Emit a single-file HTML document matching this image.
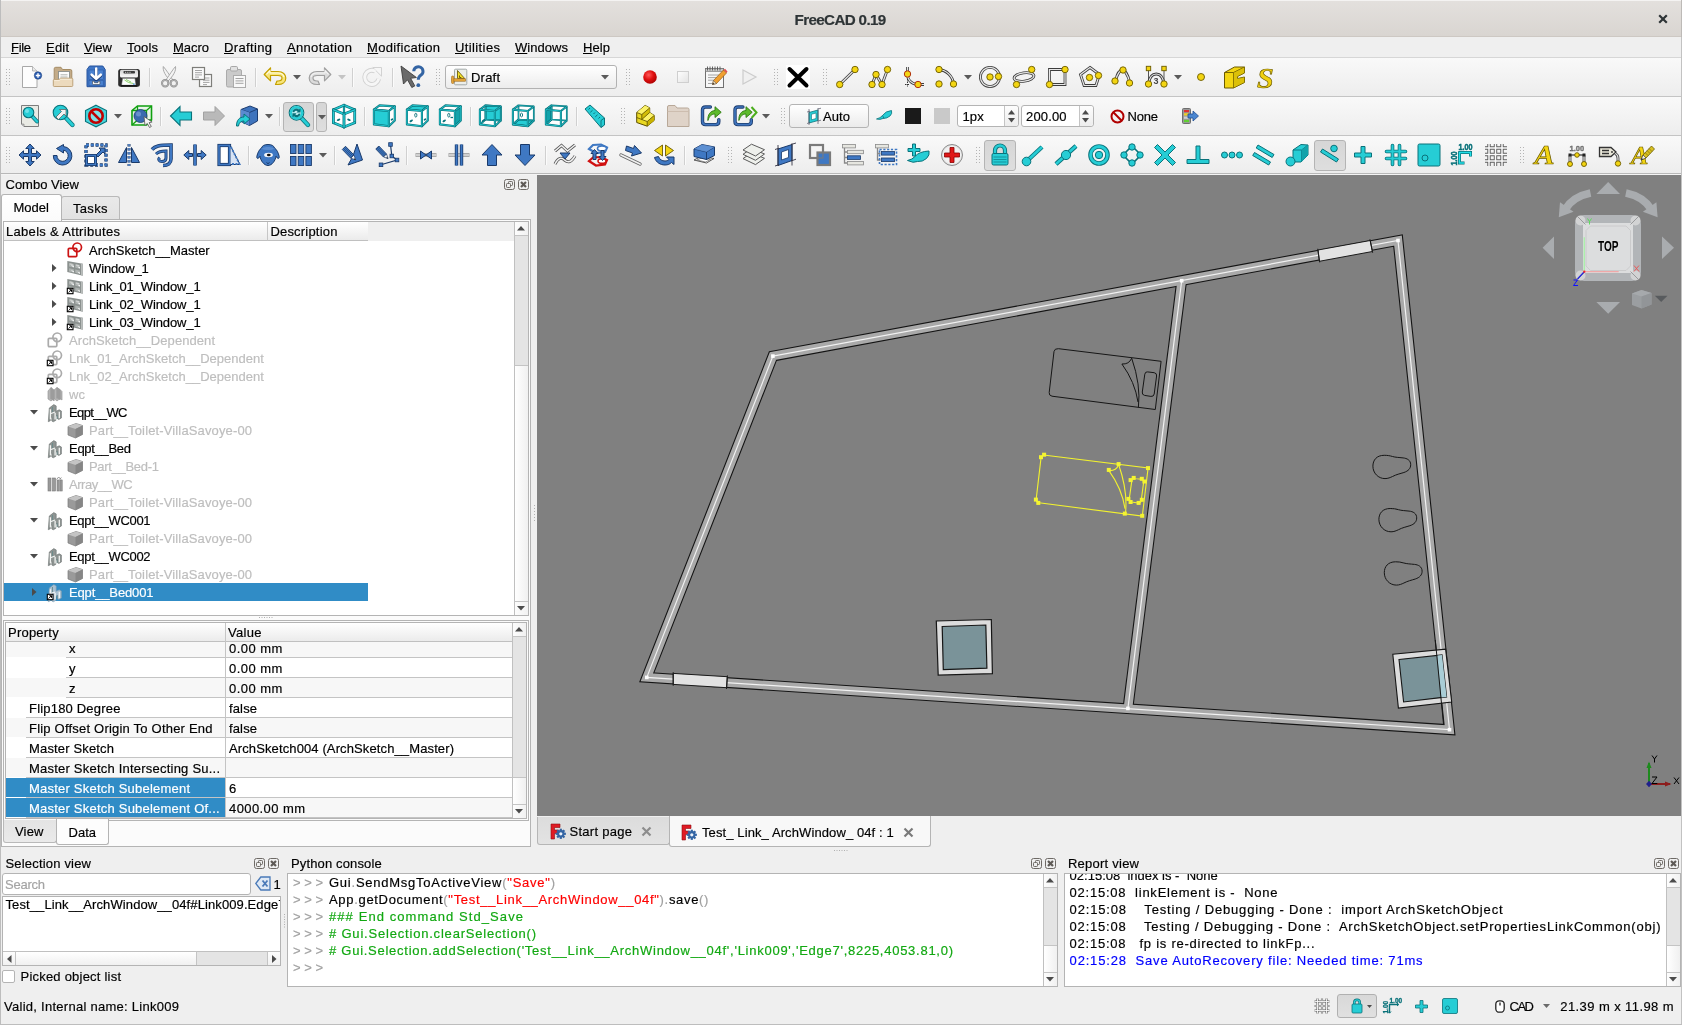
<!DOCTYPE html>
<html><head><meta charset="utf-8"><title>FreeCAD 0.19</title>
<style>
html,body{margin:0;padding:0;}
body{width:1682px;height:1025px;overflow:hidden;background:#efefef;font-family:"Liberation Sans",sans-serif;font-size:13px;position:relative;}
#w{position:absolute;left:0;top:0;width:1682px;height:1025px;will-change:transform;}
#w>div,#w>svg,#w>span{position:absolute;box-sizing:border-box;}
.t{white-space:pre;display:block;-webkit-text-stroke:0.18px currentColor;}
svg{overflow:visible;display:block;}
</style></head><body><div id="w">
<div style="left:0px;top:0px;width:1682px;height:37px;background:linear-gradient(#e3e0dd,#d9d5d1);border-top:1px solid #f4f3f2;border-bottom:1px solid #cdc8c3;"></div>
<span class="t" id="t0" style="left:794.6px;top:12.33px;font-size:15.2px;line-height:15.2px;color:#2e3436;font-weight:bold;letter-spacing:-0.651px;">FreeCAD 0.19</span>
<svg style="left:1658px;top:14px;" width="10" height="10" viewBox="0 0 10 10"><path d="M1.2 1.2l7.600 7.600M8.800 1.200l-7.600 7.600" stroke="#2e3436" stroke-width="2.2" fill="none"/></svg>
<div style="left:0px;top:37px;width:1682px;height:21px;background:#efefef;border-bottom:1px solid #d6d6d6;"></div>
<span class="t" id="t1" style="left:11px;top:40.80px;font-size:13px;line-height:13px;color:#000;letter-spacing:-0.323px;"><u>F</u>ile</span>
<span class="t" id="t2" style="left:46px;top:40.80px;font-size:13px;line-height:13px;color:#000;letter-spacing:0.198px;"><u>E</u>dit</span>
<span class="t" id="t3" style="left:84px;top:40.80px;font-size:13px;line-height:13px;color:#000;letter-spacing:0.016px;"><u>V</u>iew</span>
<span class="t" id="t4" style="left:127px;top:40.80px;font-size:13px;line-height:13px;color:#000;letter-spacing:0.160px;"><u>T</u>ools</span>
<span class="t" id="t5" style="left:173px;top:40.80px;font-size:13px;line-height:13px;color:#000;letter-spacing:-0.035px;"><u>M</u>acro</span>
<span class="t" id="t6" style="left:224px;top:40.80px;font-size:13px;line-height:13px;color:#000;letter-spacing:0.353px;"><u>D</u>rafting</span>
<span class="t" id="t7" style="left:287px;top:40.80px;font-size:13px;line-height:13px;color:#000;letter-spacing:0.314px;"><u>A</u>nnotation</span>
<span class="t" id="t8" style="left:367px;top:40.80px;font-size:13px;line-height:13px;color:#000;letter-spacing:0.328px;"><u>M</u>odification</span>
<span class="t" id="t9" style="left:455px;top:40.80px;font-size:13px;line-height:13px;color:#000;letter-spacing:0.387px;"><u>U</u>tilities</span>
<span class="t" id="t10" style="left:515px;top:40.80px;font-size:13px;line-height:13px;color:#000;letter-spacing:0.042px;"><u>W</u>indows</span>
<span class="t" id="t11" style="left:583px;top:40.80px;font-size:13px;line-height:13px;color:#000;letter-spacing:0.083px;"><u>H</u>elp</span>
<div style="left:0px;top:58px;width:1682px;height:39px;background:linear-gradient(#f9f9f9,#ededed);border-bottom:1px solid #c4c4c4;"></div>
<div style="left:0px;top:97px;width:1682px;height:39px;background:linear-gradient(#f9f9f9,#ededed);border-bottom:1px solid #c4c4c4;"></div>
<div style="left:0px;top:136px;width:1682px;height:38px;background:linear-gradient(#f9f9f9,#ededed);border-bottom:1px solid #c4c4c4;"></div>
<div style="left:0px;top:173px;width:1682px;height:1px;background:#b8b8b8;"></div>
<div style="left:0px;top:174px;width:1682px;height:1px;background:#f4f4f4;"></div>
<svg style="left:6px;top:69px;" width="5" height="18" viewBox="0 0 5 18"><rect x="0" y="0" width="1" height="1" fill="#b4b4b4"/><rect x="0" y="3" width="1" height="1" fill="#b4b4b4"/><rect x="0" y="6" width="1" height="1" fill="#b4b4b4"/><rect x="0" y="9" width="1" height="1" fill="#b4b4b4"/><rect x="0" y="12" width="1" height="1" fill="#b4b4b4"/><rect x="0" y="15" width="1" height="1" fill="#b4b4b4"/><rect x="3" y="0" width="1" height="1" fill="#b4b4b4"/><rect x="3" y="3" width="1" height="1" fill="#b4b4b4"/><rect x="3" y="6" width="1" height="1" fill="#b4b4b4"/><rect x="3" y="9" width="1" height="1" fill="#b4b4b4"/><rect x="3" y="12" width="1" height="1" fill="#b4b4b4"/><rect x="3" y="15" width="1" height="1" fill="#b4b4b4"/></svg>
<svg style="left:19.5px;top:65.0px" width="24" height="24" viewBox="0 0 24 24"><path d="M2.500 1.500h10l4.500 4.500v16.500h-14.500z" fill="#fdfdfd" stroke="#a8a8a8"/><path d="M12.500 1.500v4.500h4.500" fill="#eaeaea" stroke="#a8a8a8" stroke-width=".8"/><circle cx="18" cy="10.500" r="3.700" fill="#2c5fb3" stroke="#1c3f7c" stroke-width=".6"/><path d="M15.800 10.500h4.400M18 8.300v4.400" stroke="#fff" stroke-width="1.400"/></svg>
<svg style="left:51.0px;top:65.0px" width="24" height="24" viewBox="0 0 24 24"><path d="M3.200 21V3.800Q3.200 2.300 4.700 2.300H10L11.500 4.500H19.300Q20.800 4.500 20.800 6V21Z" fill="#c3ab88" stroke="#a58c64" stroke-width="1"/><rect x="7.500" y="6.500" width="11" height="9.500" fill="#fdfdfd" stroke="#8a8f8c" stroke-width=".9"/><path d="M9.500 9.800h7M9.500 12h7" stroke="#a8aca8" stroke-width=".9"/><path d="M2.300 15.500Q2.300 14.500 3.300 14.500H8L9.500 13.200H20.800Q21.800 13.200 21.800 14.200V20.500Q21.800 21.500 20.800 21.500H3.300Q2.300 21.500 2.300 20.500Z" fill="#ecdabd" stroke="#bfa47c" stroke-width="1"/><path d="M3.300 15.600H8.300L9.800 14.300H20.700" stroke="#f8eedb" stroke-width=".9" fill="none"/></svg>
<svg style="left:84.0px;top:65.0px" width="24" height="24" viewBox="0 0 24 24"><path d="M3 4.500L5.500 1H18.800L21.200 4.500V21.700H3Z" fill="#3f76c6" stroke="#27539c" stroke-width="1" stroke-linejoin="round"/><rect x="5" y="5" width="14.200" height="9.500" fill="#4b82d0" stroke="#27539c" stroke-width=".5"/><rect x="5" y="15.300" width="14.200" height="5.500" fill="#4b82d0" stroke="#27539c" stroke-width=".5"/><path d="M12.200 3.500V12.500M7.600 9.700L12.200 13.800L16.800 9.700" fill="none" stroke="#1f3f78" stroke-width="3.200" stroke-linecap="round" stroke-linejoin="round" transform="translate(0,.9)"/><path d="M12.200 3.500V12.500M7.600 9.700L12.200 13.800L16.800 9.700" fill="none" stroke="#fff" stroke-width="2.500" stroke-linecap="round" stroke-linejoin="round"/><path d="M8.500 16.300V18.600Q8.500 19.500 9.400 19.500H15Q15.900 19.500 15.900 18.600V16.300H14V17.700H10.400V16.300Z" fill="#f6f8fb" stroke="#2a2a2a" stroke-width=".5"/></svg>
<svg style="left:117px;top:65px;" width="24" height="24" viewBox="0 0 24 24"><defs><linearGradient id="pg1" x1="0" y1="0" x2="0" y2="1"><stop offset="0" stop-color="#d2d2d2"/><stop offset="1" stop-color="#fbfbfb"/></linearGradient></defs><rect x="1.200" y="4" width="21.700" height="17.800" rx="2.500" fill="#2b2b2b"/><rect x="3" y="4.800" width="18" height="7.700" rx="1.500" fill="url(#pg1)"/><rect x="6.500" y="6" width="11.500" height="2.600" rx=".8" fill="#3c3c3c"/><path d="M8 7.300h6" stroke="#c8c8c8" stroke-width="1" stroke-dasharray="1.200 1"/><path d="M5.500 13.300H18L19 20.300H4.500Z" fill="#fbfdfb" stroke="#444" stroke-width=".5"/><path d="M7.500 15l4 2.500 5 1M9 14.500l5 2.500" stroke="#8ccf6a" stroke-width="1" fill="none"/><rect x="16" y="18.500" width="1.800" height="1.200" fill="#4a90d9"/><rect x="3.500" y="20" width="17" height="1.800" rx=".8" fill="#171717"/></svg>
<div style="left:149px;top:68px;width:1px;height:19px;background:#d0d0d0;"></div>
<div style="left:150px;top:68px;width:1px;height:19px;background:#fbfbfb;"></div>
<svg style="left:157.0px;top:65.0px" width="24" height="24" viewBox="0 0 24 24"><path d="M6.300 1.500C5.500 5.500 8.500 11 13.800 16L15.600 14.600C12 9.500 9 4.500 6.300 1.500Z" fill="#f4f4f4" stroke="#a2a2a2" stroke-width=".9"/><g transform="translate(24.800,0) scale(-1,1)"><path d="M6.300 1.500C5.500 5.500 8.500 11 13.800 16L15.600 14.600C12 9.500 9 4.500 6.300 1.500Z" fill="#f4f4f4" stroke="#a2a2a2" stroke-width=".9"/></g><circle cx="8.200" cy="18.300" r="3.200" fill="none" stroke="#8e8e8e" stroke-width="2"/><circle cx="16.800" cy="18.300" r="3.200" fill="none" stroke="#8e8e8e" stroke-width="2"/><circle cx="8.200" cy="18.300" r="3.200" fill="none" stroke="#c8c8c8" stroke-width=".6"/><circle cx="16.800" cy="18.300" r="3.200" fill="none" stroke="#c8c8c8" stroke-width=".6"/></svg>
<svg style="left:190.0px;top:65.0px" width="24" height="24" viewBox="0 0 24 24"><rect x="9.500" y="9.500" width="12" height="12" fill="#fafafa" stroke="#7e7e7a" stroke-width="1.200"/><path d="M13 13h6.5M13 15.2h6.5M13 17.4h6.5" stroke="#9a9a9a" stroke-width=".9"/><path d="M13 19.600h4" stroke="#9a9a9a" stroke-width=".9"/><rect x="2.500" y="2.500" width="12" height="12" fill="#fafafa" stroke="#7e7e7a" stroke-width="1.200"/><path d="M5 5.5h7M5 7.7h7M5 9.9h7" stroke="#9a9a9a" stroke-width=".9"/><path d="M5 12.100h4" stroke="#9a9a9a" stroke-width=".9"/></svg>
<svg style="left:224.0px;top:65.0px" width="24" height="24" viewBox="0 0 24 24"><rect x="2.500" y="4.500" width="15" height="17.500" rx="1.500" fill="#cacaca" stroke="#ababab"/><rect x="6.500" y="1.500" width="7" height="4.500" rx="1.200" fill="#e2e2e2" stroke="#a8a8a8"/><rect x="9.500" y="10.500" width="12" height="12" fill="#f8f8f8" stroke="#ababab"/><path d="M11.5 13.5h8M11.5 15.9h8M11.5 18.3h8" stroke="#9a9a9a" stroke-width=".9"/></svg>
<div style="left:255px;top:68px;width:1px;height:19px;background:#d0d0d0;"></div>
<div style="left:256px;top:68px;width:1px;height:19px;background:#fbfbfb;"></div>
<svg style="left:263.0px;top:65.0px" width="24" height="24" viewBox="0 0 24 24"><path d="M1.200 9.500L7.500 2.800V6.500H15C20 6.500 22.800 9.500 22.800 13C22.800 17 19.500 19.500 15 19.500H12.500L14 16H15C17.500 16 19 14.800 19 13C19 11.200 17.500 10.500 15 10.500H7.500V15.800Z" fill="#f7e57a" stroke="#c4a000" stroke-width="1.200" stroke-linejoin="round"/><path d="M3.500 9.300l3.500-3.700v2.400h8c3.500 0 5.500 2 6 4" fill="none" stroke="#fffbe0" stroke-width="1.100"/></svg>
<svg style="left:293px;top:75px;" width="8" height="5" viewBox="0 0 8 5"><path d="M0 0h8l-4 4.500z" fill="#5a5a5a"/></svg>
<svg style="left:308.0px;top:65.0px" width="24" height="24" viewBox="0 0 24 24"><g transform="translate(24,0) scale(-1,1)"><path d="M1.200 9.500L7.500 2.800V6.500H15C20 6.500 22.800 9.500 22.800 13C22.800 17 19.500 19.500 15 19.500H12.500L14 16H15C17.500 16 19 14.800 19 13C19 11.200 17.500 10.500 15 10.500H7.500V15.800Z" fill="#dcdcdc" stroke="#a0a0a0" stroke-width="1.200" stroke-linejoin="round"/><path d="M3.500 9.300l3.500-3.700v2.400h8c3.500 0 5.500 2 6 4" fill="none" stroke="#f4f4f4" stroke-width="1.100"/></g></svg>
<svg style="left:338px;top:75px;" width="8" height="5" viewBox="0 0 8 5"><path d="M0 0h8l-4 4.500z" fill="#c4c4c4"/></svg>
<div style="left:352px;top:68px;width:1px;height:19px;background:#d0d0d0;"></div>
<div style="left:353px;top:68px;width:1px;height:19px;background:#fbfbfb;"></div>
<svg style="left:360.0px;top:65.0px" width="24" height="24" viewBox="0 0 24 24"><path d="M18.700 14a7.100 7.100 0 1 1-3.400-7.800" stroke="#d2d2d2" stroke-width="4.800" fill="none"/><path d="M12.800 2.500h8.700v8.700z" fill="#f6f6f6" stroke="#d2d2d2" stroke-width="1"/><path d="M18.700 14a7.100 7.100 0 1 1-3.400-7.800" stroke="#f6f6f6" stroke-width="3" fill="none"/></svg>
<div style="left:392px;top:68px;width:1px;height:19px;background:#d0d0d0;"></div>
<div style="left:393px;top:68px;width:1px;height:19px;background:#fbfbfb;"></div>
<svg style="left:400.0px;top:65.0px" width="24" height="24" viewBox="0 0 24 24"><path d="M1 1l2.500 18 4-4.200 4.300 7.700 3-1.600-4.200-7.600 5.800-.8z" fill="#6a6a6a" stroke="#3e3e3e" stroke-width=".9"/><path d="M13.800 6.300a4.600 4.600 0 1 1 7.200 3.800c-2 1.400-2.700 2.300-2.700 4.700" fill="none" stroke="#3465a4" stroke-width="3"/><circle cx="18.300" cy="20.200" r="1.900" fill="#3465a4"/></svg>
<svg style="left:436px;top:69px;" width="5" height="18" viewBox="0 0 5 18"><rect x="0" y="0" width="1" height="1" fill="#b4b4b4"/><rect x="0" y="3" width="1" height="1" fill="#b4b4b4"/><rect x="0" y="6" width="1" height="1" fill="#b4b4b4"/><rect x="0" y="9" width="1" height="1" fill="#b4b4b4"/><rect x="0" y="12" width="1" height="1" fill="#b4b4b4"/><rect x="0" y="15" width="1" height="1" fill="#b4b4b4"/><rect x="3" y="0" width="1" height="1" fill="#b4b4b4"/><rect x="3" y="3" width="1" height="1" fill="#b4b4b4"/><rect x="3" y="6" width="1" height="1" fill="#b4b4b4"/><rect x="3" y="9" width="1" height="1" fill="#b4b4b4"/><rect x="3" y="12" width="1" height="1" fill="#b4b4b4"/><rect x="3" y="15" width="1" height="1" fill="#b4b4b4"/></svg>
<div style="left:445px;top:65px;width:172px;height:24px;background:linear-gradient(#ffffff,#ececec);border:1px solid #b2b2b2;border-radius:3px;"></div>
<svg style="left:451px;top:68px;" width="17" height="18" viewBox="0 0 17 18"><rect x="3.500" y="1.200" width="12.300" height="15.600" rx="1" fill="#eceeea" stroke="#9aa0a0" stroke-width=".9"/><path d="M6.500 2.500v8h7.200z" fill="#f3e02a" stroke="#5c4e00" stroke-width=".8"/><path d="M8.500 7.500v2h1.800" stroke="#5c4e00" stroke-width=".9" fill="none"/><rect x="1" y="10.800" width="13.500" height="2.400" fill="#e8a83c" stroke="#9a6414" stroke-width=".6"/><rect x=".6" y="8" width="2.200" height="7.500" rx=".8" fill="#e8a83c" stroke="#9a6414" stroke-width=".6"/></svg>
<span class="t" id="t12" style="left:471px;top:71.00px;font-size:13px;line-height:13px;color:#000;letter-spacing:0.207px;">Draft</span>
<svg style="left:601px;top:75px;" width="8" height="5" viewBox="0 0 8 5"><path d="M0 0h8l-4 4.500z" fill="#5a5a5a"/></svg>
<svg style="left:626px;top:69px;" width="5" height="18" viewBox="0 0 5 18"><rect x="0" y="0" width="1" height="1" fill="#b4b4b4"/><rect x="0" y="3" width="1" height="1" fill="#b4b4b4"/><rect x="0" y="6" width="1" height="1" fill="#b4b4b4"/><rect x="0" y="9" width="1" height="1" fill="#b4b4b4"/><rect x="0" y="12" width="1" height="1" fill="#b4b4b4"/><rect x="0" y="15" width="1" height="1" fill="#b4b4b4"/><rect x="3" y="0" width="1" height="1" fill="#b4b4b4"/><rect x="3" y="3" width="1" height="1" fill="#b4b4b4"/><rect x="3" y="6" width="1" height="1" fill="#b4b4b4"/><rect x="3" y="9" width="1" height="1" fill="#b4b4b4"/><rect x="3" y="12" width="1" height="1" fill="#b4b4b4"/><rect x="3" y="15" width="1" height="1" fill="#b4b4b4"/></svg>
<svg style="left:643px;top:70px;" width="14" height="14" viewBox="0 0 14 14"><defs><radialGradient id="rg1" cx=".4" cy=".35" r=".7"><stop offset="0" stop-color="#ff5a5a"/><stop offset=".5" stop-color="#e01010"/><stop offset="1" stop-color="#a80000"/></radialGradient></defs><circle cx="7" cy="7" r="6.800" fill="url(#rg1)"/></svg>
<div style="left:677px;top:71px;width:12px;height:12px;background:linear-gradient(135deg,#fdfdfd,#e4e4e4);border:1px solid #cfcfcf;"></div>
<svg style="left:703.5px;top:65.0px" width="24" height="24" viewBox="0 0 24 24"><rect x="1.500" y="3.500" width="18" height="19" fill="#f7f7f7" stroke="#707070"/><rect x="1.500" y="3.500" width="18" height="3" fill="#c8c8c8" stroke="#707070" stroke-width=".6"/><path d="M3.500 1.500v4M6 1.500v4M8.500 1.500v4M11 1.500v4M13.500 1.500v4M16 1.500v4" stroke="#555" stroke-width=".9"/><path d="M4 10h11M4 12.6h11M4 15.2h11" stroke="#9a9a9a" stroke-width=".9"/><path d="M4 18.500h9" stroke="#9a9a9a" stroke-width=".9"/><path d="M8.500 19.500l1-4 10-10.500 3 3-10 10.500z" fill="#f0a030" stroke="#9a5a10" stroke-width=".7"/><path d="M19.500 5l3 3 1-1.500-2.500-2.800z" fill="#e05050"/><path d="M8.500 19.500l1-4 3 3z" fill="#f0d8b0" stroke="#555" stroke-width=".5"/><path d="M8.500 19.500l.5-1.800 1.300 1.300z" fill="#222"/></svg>
<svg style="left:741.5px;top:69px;" width="15" height="16" viewBox="0 0 15 16"><path d="M1 1l13 7-13 7z" fill="#f0f0f0" stroke="#cccccc" stroke-width="1.200"/></svg>
<svg style="left:774px;top:69px;" width="5" height="18" viewBox="0 0 5 18"><rect x="0" y="0" width="1" height="1" fill="#b4b4b4"/><rect x="0" y="3" width="1" height="1" fill="#b4b4b4"/><rect x="0" y="6" width="1" height="1" fill="#b4b4b4"/><rect x="0" y="9" width="1" height="1" fill="#b4b4b4"/><rect x="0" y="12" width="1" height="1" fill="#b4b4b4"/><rect x="0" y="15" width="1" height="1" fill="#b4b4b4"/><rect x="3" y="0" width="1" height="1" fill="#b4b4b4"/><rect x="3" y="3" width="1" height="1" fill="#b4b4b4"/><rect x="3" y="6" width="1" height="1" fill="#b4b4b4"/><rect x="3" y="9" width="1" height="1" fill="#b4b4b4"/><rect x="3" y="12" width="1" height="1" fill="#b4b4b4"/><rect x="3" y="15" width="1" height="1" fill="#b4b4b4"/></svg>
<div style="left:786px;top:65px;width:24px;height:24px;background:#fff;"><svg width="24" height="24" viewBox="0 0 24 24" style="position:absolute;left:0;top:0"><path d="M3.500 4l17 16.500M20.500 4l-17 16.500" stroke="#000" stroke-width="4" stroke-linecap="round"/></svg></div>
<svg style="left:823px;top:69px;" width="5" height="18" viewBox="0 0 5 18"><rect x="0" y="0" width="1" height="1" fill="#b4b4b4"/><rect x="0" y="3" width="1" height="1" fill="#b4b4b4"/><rect x="0" y="6" width="1" height="1" fill="#b4b4b4"/><rect x="0" y="9" width="1" height="1" fill="#b4b4b4"/><rect x="0" y="12" width="1" height="1" fill="#b4b4b4"/><rect x="0" y="15" width="1" height="1" fill="#b4b4b4"/><rect x="3" y="0" width="1" height="1" fill="#b4b4b4"/><rect x="3" y="3" width="1" height="1" fill="#b4b4b4"/><rect x="3" y="6" width="1" height="1" fill="#b4b4b4"/><rect x="3" y="9" width="1" height="1" fill="#b4b4b4"/><rect x="3" y="12" width="1" height="1" fill="#b4b4b4"/><rect x="3" y="15" width="1" height="1" fill="#b4b4b4"/></svg>
<svg style="left:835.0px;top:65.0px" width="24" height="24" viewBox="0 0 24 24"><path d="M4.700 19.500L20 4.500" fill="none" stroke="#3c3c3c" stroke-width="2.800"/><path d="M4.700 19.500L20 4.500" fill="none" stroke="#e8e8e8" stroke-width="1.200"/><circle cx="4.7" cy="19.5" r="3.2" fill="#f3d512" stroke="#6b5a00" stroke-width=".9"/><circle cx="20" cy="4.5" r="3.2" fill="#f3d512" stroke="#6b5a00" stroke-width=".9"/></svg>
<svg style="left:868.0px;top:65.0px" width="24" height="24" viewBox="0 0 24 24"><path d="M4 19.500L8 9.500L14 19.500L19.500 4.500" fill="none" stroke="#3c3c3c" stroke-width="2.800"/><path d="M4 19.500L8 9.500L14 19.500L19.500 4.500" fill="none" stroke="#e8e8e8" stroke-width="1.200"/><circle cx="4" cy="19.5" r="3.2" fill="#f3d512" stroke="#6b5a00" stroke-width=".9"/><circle cx="8" cy="9.5" r="3.2" fill="#f3d512" stroke="#6b5a00" stroke-width=".9"/><circle cx="14" cy="19.5" r="3.2" fill="#f3d512" stroke="#6b5a00" stroke-width=".9"/><circle cx="19.5" cy="4.5" r="3.2" fill="#f3d512" stroke="#6b5a00" stroke-width=".9"/></svg>
<svg style="left:900.5px;top:65.0px" width="24" height="24" viewBox="0 0 24 24"><path d="M6.500 2v5M18 19.500h5" fill="none" stroke="#3c3c3c" stroke-width="2.800"/><path d="M6.500 2v5M18 19.500h5" fill="none" stroke="#e8e8e8" stroke-width="1.200"/><path d="M6.500 9c0 6 4 10 10 10.500" fill="none" stroke="#3c3c3c" stroke-width="2.800"/><path d="M6.500 9c0 6 4 10 10 10.500" fill="none" stroke="#e8e8e8" stroke-width="1.200"/><circle cx="6.500" cy="9" r="3.200" fill="#f3d512" stroke="#b03010" stroke-width="1"/><circle cx="17" cy="19.500" r="3.200" fill="#f3d512" stroke="#b03010" stroke-width="1"/><path d="M4 19.500h5M6.500 14v8" stroke="#333" stroke-width="1" stroke-dasharray="1.500 1"/></svg>
<svg style="left:934.0px;top:65.0px" width="24" height="24" viewBox="0 0 24 24"><path d="M5 4.500C12 5 19 11 19.500 19" fill="none" stroke="#3c3c3c" stroke-width="2.800"/><path d="M5 4.500C12 5 19 11 19.500 19" fill="none" stroke="#e8e8e8" stroke-width="1.200"/><circle cx="5" cy="4.5" r="3.2" fill="#f3d512" stroke="#6b5a00" stroke-width=".9"/><circle cx="5" cy="19" r="3.2" fill="#f3d512" stroke="#6b5a00" stroke-width=".9"/><circle cx="19.5" cy="19" r="3.2" fill="#f3d512" stroke="#6b5a00" stroke-width=".9"/></svg>
<svg style="left:964px;top:75px;" width="8" height="5" viewBox="0 0 8 5"><path d="M0 0h8l-4 4.500z" fill="#5a5a5a"/></svg>
<svg style="left:978.0px;top:65.0px" width="24" height="24" viewBox="0 0 24 24"><circle cx="12" cy="12" r="9.600" fill="none" stroke="#3c3c3c" stroke-width="2.800"/><circle cx="12" cy="12" r="9.600" fill="none" stroke="#e8e8e8" stroke-width="1.200"/><circle cx="12" cy="12" r="3.2" fill="#f3d512" stroke="#6b5a00" stroke-width=".9"/><circle cx="20.5" cy="11.5" r="3.2" fill="#f3d512" stroke="#6b5a00" stroke-width=".9"/></svg>
<svg style="left:1012.0px;top:65.0px" width="24" height="24" viewBox="0 0 24 24"><ellipse cx="12" cy="12" rx="10" ry="4.200" transform="rotate(-8 12 12)" fill="none" stroke="#3c3c3c" stroke-width="2.800"/><ellipse cx="12" cy="12" rx="10" ry="4.200" transform="rotate(-8 12 12)" fill="none" stroke="#e8e8e8" stroke-width="1.200"/><circle cx="19.7" cy="4.5" r="3.2" fill="#f3d512" stroke="#6b5a00" stroke-width=".9"/><circle cx="4.5" cy="19.5" r="3.2" fill="#f3d512" stroke="#6b5a00" stroke-width=".9"/></svg>
<svg style="left:1045.0px;top:65.0px" width="24" height="24" viewBox="0 0 24 24"><path d="M4.500 4.500h15.500v15h-15.500z" fill="none" stroke="#3c3c3c" stroke-width="2.800"/><path d="M4.500 4.500h15.500v15h-15.500z" fill="none" stroke="#e8e8e8" stroke-width="1.200"/><circle cx="20" cy="4.5" r="3.2" fill="#f3d512" stroke="#6b5a00" stroke-width=".9"/><circle cx="4.5" cy="19.5" r="3.2" fill="#f3d512" stroke="#6b5a00" stroke-width=".9"/></svg>
<svg style="left:1077.5px;top:65.0px" width="24" height="24" viewBox="0 0 24 24"><path d="M12 2.500l9.500 7-3.600 11h-11.800l-3.600-11z" fill="none" stroke="#3c3c3c" stroke-width="2.800"/><path d="M12 2.500l9.500 7-3.600 11h-11.800l-3.600-11z" fill="none" stroke="#e8e8e8" stroke-width="1.200"/><circle cx="11.5" cy="12.5" r="3.2" fill="#f3d512" stroke="#6b5a00" stroke-width=".9"/><circle cx="20.5" cy="10.5" r="3.2" fill="#f3d512" stroke="#6b5a00" stroke-width=".9"/></svg>
<svg style="left:1111.0px;top:65.0px" width="24" height="24" viewBox="0 0 24 24"><path d="M4.500 16c2-9 5.500-11 7-11s5 3 7.500 13" fill="none" stroke="#3c3c3c" stroke-width="2.800"/><path d="M4.500 16c2-9 5.500-11 7-11s5 3 7.500 13" fill="none" stroke="#e8e8e8" stroke-width="1.200"/><circle cx="12" cy="5" r="3.2" fill="#f3d512" stroke="#6b5a00" stroke-width=".9"/><circle cx="4" cy="16" r="3.2" fill="#f3d512" stroke="#6b5a00" stroke-width=".9"/><circle cx="18.5" cy="18" r="3.2" fill="#f3d512" stroke="#6b5a00" stroke-width=".9"/></svg>
<svg style="left:1143.5px;top:65.0px" width="24" height="24" viewBox="0 0 24 24"><path d="M4.500 3.500v15M20 3.500v15" stroke="#555" stroke-width="1"/><path d="M4.500 19c1-8 4-10 7.800-10s6.700 2 7.700 10" fill="none" stroke="#3c3c3c" stroke-width="2.800"/><path d="M4.500 19c1-8 4-10 7.800-10s6.700 2 7.700 10" fill="none" stroke="#e8e8e8" stroke-width="1.200"/><rect x="2.3" y="1.2999999999999998" width="4.4" height="4.4" fill="#f3d512" stroke="#6b5a00" stroke-width=".9"/><rect x="17.8" y="1.2999999999999998" width="4.4" height="4.4" fill="#f3d512" stroke="#6b5a00" stroke-width=".9"/><circle cx="4.5" cy="19" r="3.2" fill="#f3d512" stroke="#6b5a00" stroke-width=".9"/><circle cx="20" cy="19" r="3.2" fill="#f3d512" stroke="#6b5a00" stroke-width=".9"/><text x="9.500" y="19" font-family="Liberation Sans" font-weight="bold" font-size="9" fill="#444">3</text></svg>
<svg style="left:1174px;top:75px;" width="8" height="5" viewBox="0 0 8 5"><path d="M0 0h8l-4 4.500z" fill="#5a5a5a"/></svg>
<svg style="left:1189.0px;top:65.0px" width="24" height="24" viewBox="0 0 24 24"><circle cx="12" cy="12" r="3.5" fill="#f3d512" stroke="#6b5a00" stroke-width=".9"/></svg>
<svg style="left:1222.0px;top:65.0px" width="24" height="24" viewBox="0 0 24 24"><path d="M2.500 7.500l10-5.500h10v6l-7 3.500v2l7-1.500v5.500l-11 5.500h-9z" fill="#f3d512" stroke="#6b5a00" stroke-width="1"/><path d="M2.500 7.500h9v15.500M11.500 7.500l11-5.500" stroke="#6b5a00" stroke-width=".9" fill="none"/><path d="M11.500 7.500v15.500l11-5.500v-5.500l-7 1.500v-2l7-3.500v-6z" fill="#c9ae00" opacity=".55"/></svg>
<svg style="left:1255.5px;top:65.0px" width="24" height="24" viewBox="0 0 24 24"><text x="1" y="22.500" font-family="Liberation Serif" font-style="italic" font-weight="bold" font-size="30" fill="#f0d010" stroke="#6b5a00" stroke-width=".7">S</text></svg>
<svg style="left:6px;top:108px;" width="5" height="18" viewBox="0 0 5 18"><rect x="0" y="0" width="1" height="1" fill="#b4b4b4"/><rect x="0" y="3" width="1" height="1" fill="#b4b4b4"/><rect x="0" y="6" width="1" height="1" fill="#b4b4b4"/><rect x="0" y="9" width="1" height="1" fill="#b4b4b4"/><rect x="0" y="12" width="1" height="1" fill="#b4b4b4"/><rect x="0" y="15" width="1" height="1" fill="#b4b4b4"/><rect x="3" y="0" width="1" height="1" fill="#b4b4b4"/><rect x="3" y="3" width="1" height="1" fill="#b4b4b4"/><rect x="3" y="6" width="1" height="1" fill="#b4b4b4"/><rect x="3" y="9" width="1" height="1" fill="#b4b4b4"/><rect x="3" y="12" width="1" height="1" fill="#b4b4b4"/><rect x="3" y="15" width="1" height="1" fill="#b4b4b4"/></svg>
<svg style="left:18.0px;top:104.0px" width="24" height="24" viewBox="0 0 24 24"><path d="M3.500 1.500h17v21h-14.500l-2.500-2.500z" fill="#e9eae4" stroke="#7d7d7d"/><path d="M3.500 20l2.500 .2v2.300" fill="#cfcfcf" stroke="#7d7d7d" stroke-width=".7"/><path d="M13.500 11.500l5.500 6" stroke="#0a727a" stroke-width="4" stroke-linecap="round"/><path d="M13.500 11.500l5.500 6" stroke="#26cdd5" stroke-width="2.400" stroke-linecap="round"/><circle cx="10.500" cy="8.500" r="5.300" fill="#26cdd5" stroke="#0a727a" stroke-width="1.100"/><circle cx="9" cy="7" r="2" fill="#8feaf0" opacity=".7"/></svg>
<svg style="left:51.0px;top:104.0px" width="24" height="24" viewBox="0 0 24 24"><path d="M14 13l7.500 8" stroke="#0a727a" stroke-width="4.400" stroke-linecap="round"/><path d="M14 13l7.500 8" stroke="#26cdd5" stroke-width="2.800" stroke-linecap="round"/><circle cx="9.500" cy="8.500" r="7.300" fill="#26cdd5" stroke="#0a727a" stroke-width="1.100"/><path d="M5 13l5.500-5.500-2-2h6.500v6.500l-2-2-5.500 5.500z" fill="#f2f2f2" stroke="#555" stroke-width=".7"/></svg>
<svg style="left:84.0px;top:104.0px" width="24" height="24" viewBox="0 0 24 24"><polygon points="12,1.200 22.500,6.500 22.500,17.500 12,22.800 1.500,17.500 1.500,6.500" fill="#45d5dc" stroke="#0a727a" stroke-width="1.100"/><circle cx="12" cy="12" r="6.700" fill="#7fe3e8" stroke="#c00000" stroke-width="2.600"/><path d="M7.300 7.300l9.400 9.400" stroke="#c00000" stroke-width="2.600"/></svg>
<svg style="left:114px;top:114px;" width="8" height="5" viewBox="0 0 8 5"><path d="M0 0h8l-4 4.500z" fill="#5a5a5a"/></svg>
<svg style="left:129.5px;top:104.0px" width="24" height="24" viewBox="0 0 24 24"><path d="M2 6.500l5.500-4.500h14v14l-5 5h-14.500z" fill="#e9f5e9" stroke="#10a010" stroke-width="1.600"/><path d="M2 6.500h14.500v14.500M16.500 6.500l5-4.500M7.500 2v14h14M7.500 16l-5.500 5" stroke="#10a010" stroke-width="1.300" fill="none"/><circle cx="10.500" cy="12" r="6.500" fill="#3a6ab0" stroke="#1c3c70" stroke-width=".8"/><circle cx="8.500" cy="10" r="2.500" fill="#7da0d8" opacity=".7"/><path d="M14 12.500l1 9 2.300-2 2.200 4 1.800-1-2.200-3.800 3-.7z" fill="#f4f4f4" stroke="#555" stroke-width=".8"/></svg>
<div style="left:160px;top:107px;width:1px;height:19px;background:#d0d0d0;"></div>
<div style="left:161px;top:107px;width:1px;height:19px;background:#fbfbfb;"></div>
<svg style="left:169.0px;top:104.0px" width="24" height="24" viewBox="0 0 24 24"><path d="M1.500 12l9.500-9.500v5.500h11.500v8h-11.500v5.500z" fill="#26cdd5" stroke="#0a727a" stroke-width="1.100"/></svg>
<svg style="left:202.0px;top:104.0px" width="24" height="24" viewBox="0 0 24 24"><g transform="translate(24,0) scale(-1,1)"><path d="M1.500 12l9.500-9.500v5.500h11.500v8h-11.500v5.500z" fill="#b9b9b9" stroke="#a2a2a2" stroke-width="1"/></g></svg>
<svg style="left:235.0px;top:104.0px" width="24" height="24" viewBox="0 0 24 24"><path d="M6 5.500l9-3.500 7.500 3v12l-8 4.500-8.500-4z" fill="#3f74bd" stroke="#1c3c70" stroke-width="1"/><path d="M6 5.500l8.500 3 8-3.500M14.500 8.500v13" stroke="#1c3c70" stroke-width=".9" fill="none"/><path d="M6 5.500l8.500 3v13l-8.500-4z" fill="#5a8ad0"/><path d="M1.500 22c0-6 3-9 7.500-9v-3l6 5-6 5v-3c-3 0-5 1.500-5.500 5z" fill="#26cdd5" stroke="#0a727a" stroke-width="1"/></svg>
<svg style="left:265px;top:114px;" width="8" height="5" viewBox="0 0 8 5"><path d="M0 0h8l-4 4.500z" fill="#5a5a5a"/></svg>
<div style="left:279px;top:107px;width:1px;height:19px;background:#d0d0d0;"></div>
<div style="left:280px;top:107px;width:1px;height:19px;background:#fbfbfb;"></div>
<div style="left:283px;top:101.5px;width:31px;height:30px;background:linear-gradient(#d6d6d6,#dedede);border:1px solid #b4b4b4;border-radius:3px;"></div>
<div style="left:316px;top:101.5px;width:11px;height:30px;background:linear-gradient(#d6d6d6,#dedede);border:1px solid #b4b4b4;border-radius:3px;"></div>
<svg style="left:286.5px;top:104.0px" width="24" height="24" viewBox="0 0 24 24"><path d="M14 13.500l7 7.500" stroke="#0a727a" stroke-width="4.400" stroke-linecap="round"/><path d="M14 13.500l7 7.500" stroke="#26cdd5" stroke-width="2.800" stroke-linecap="round"/><circle cx="9.500" cy="8.800" r="7.300" fill="#bfeff2" stroke="#0a727a" stroke-width="1.100"/><circle cx="9.500" cy="8.800" r="5.600" fill="none" stroke="#26cdd5" stroke-width="2.600"/><path d="M5.500 8a4 4 0 0 1 6.500-2.500l1.500-1v4h-4l1.200-1.300a2.300 2.300 0 0 0-3.500 1zM13.500 9.800a4 4 0 0 1-6.500 2.500l-1.500 1v-4h4l-1.200 1.300a2.300 2.300 0 0 0 3.500-1z" fill="#0a727a"/></svg>
<svg style="left:317.5px;top:115px;" width="8" height="5" viewBox="0 0 8 5"><path d="M0 0h8l-4 4.500z" fill="#5a5a5a"/></svg>
<svg style="left:332.0px;top:104.0px" width="24" height="24" viewBox="0 0 24 24"><polygon points="12,1.2 22.7,5.8 22.7,18.7 12,23 1.4,18.7 1.4,5.8" fill="#fff"/><path d="M12 1.2L12 23" stroke="#0a727a" stroke-width="2.2" stroke-linecap="round"/><path d="M12 1.2L12 23" stroke="#26cdd5" stroke-width="0.7999999999999999" stroke-linecap="round"/><path d="M12 1.2L22.7 5.8" stroke="#0a727a" stroke-width="2.8" stroke-linecap="round"/><path d="M12 1.2L22.7 5.8" stroke="#26cdd5" stroke-width="1.4" stroke-linecap="round"/><path d="M22.7 5.8L22.7 18.7" stroke="#0a727a" stroke-width="2.8" stroke-linecap="round"/><path d="M22.7 5.8L22.7 18.7" stroke="#26cdd5" stroke-width="1.4" stroke-linecap="round"/><path d="M22.7 18.7L12 23" stroke="#0a727a" stroke-width="2.8" stroke-linecap="round"/><path d="M22.7 18.7L12 23" stroke="#26cdd5" stroke-width="1.4" stroke-linecap="round"/><path d="M12 23L1.4 18.7" stroke="#0a727a" stroke-width="2.8" stroke-linecap="round"/><path d="M12 23L1.4 18.7" stroke="#26cdd5" stroke-width="1.4" stroke-linecap="round"/><path d="M1.4 18.7L1.4 5.8" stroke="#0a727a" stroke-width="2.8" stroke-linecap="round"/><path d="M1.4 18.7L1.4 5.8" stroke="#26cdd5" stroke-width="1.4" stroke-linecap="round"/><path d="M1.4 5.8L12 1.2" stroke="#0a727a" stroke-width="2.8" stroke-linecap="round"/><path d="M1.4 5.8L12 1.2" stroke="#26cdd5" stroke-width="1.4" stroke-linecap="round"/><path d="M12 10L22.7 5.8" stroke="#0a727a" stroke-width="2.8" stroke-linecap="round"/><path d="M12 10L22.7 5.8" stroke="#26cdd5" stroke-width="1.4" stroke-linecap="round"/><path d="M12 10L1.4 5.8" stroke="#0a727a" stroke-width="2.8" stroke-linecap="round"/><path d="M12 10L1.4 5.8" stroke="#26cdd5" stroke-width="1.4" stroke-linecap="round"/><path d="M12 10L12 23" stroke="#0a727a" stroke-width="2.8" stroke-linecap="round"/><path d="M12 10L12 23" stroke="#26cdd5" stroke-width="1.4" stroke-linecap="round"/><ellipse cx="6.500" cy="15.800" rx="1.900" ry="1" transform="rotate(-25 6.500 15.800)" fill="#0a727a"/><ellipse cx="17" cy="15.800" rx="1.900" ry="1" transform="rotate(25 17 15.800)" fill="#0a727a"/></svg>
<div style="left:364px;top:107px;width:1px;height:19px;background:#d0d0d0;"></div>
<div style="left:365px;top:107px;width:1px;height:19px;background:#fbfbfb;"></div>
<svg style="left:371.5px;top:104.0px" width="24" height="24" viewBox="0 0 24 24"><polygon points="1.9,5.6 16.9,7.0 22.8,2.4 7.5,1.4" fill="#fff" stroke="#0a727a" stroke-width="2.1" stroke-linejoin="round"/><polygon points="1.9,5.6 16.9,7.0 22.8,2.4 7.5,1.4" fill="none" stroke="#26cdd5" stroke-width="0.8999999999999999" stroke-linejoin="round"/><polygon points="16.9,7.0 22.8,2.4 22.8,16.6 16.9,22.2" fill="#fff" stroke="#0a727a" stroke-width="2.1" stroke-linejoin="round"/><polygon points="16.9,7.0 22.8,2.4 22.8,16.6 16.9,22.2" fill="none" stroke="#26cdd5" stroke-width="0.8999999999999999" stroke-linejoin="round"/><polygon points="1.9,5.6 16.9,7.0 16.9,22.2 1.9,20.4" fill="#26cdd5" stroke="#0a727a" stroke-width="2.1" stroke-linejoin="round"/><polygon points="1.9,5.6 16.9,7.0 16.9,22.2 1.9,20.4" fill="none" stroke="#26cdd5" stroke-width="0.8999999999999999" stroke-linejoin="round"/><ellipse cx="20" cy="15.500" rx="1.500" ry=".9" transform="rotate(-35 20 15.500)" fill="#0a727a"/></svg>
<svg style="left:405.0px;top:104.0px" width="24" height="24" viewBox="0 0 24 24"><polygon points="1.9,5.6 16.9,7.0 22.8,2.4 7.5,1.4" fill="#26cdd5" stroke="#0a727a" stroke-width="2.1" stroke-linejoin="round"/><polygon points="1.9,5.6 16.9,7.0 22.8,2.4 7.5,1.4" fill="none" stroke="#26cdd5" stroke-width="0.8999999999999999" stroke-linejoin="round"/><polygon points="16.9,7.0 22.8,2.4 22.8,16.6 16.9,22.2" fill="#fff" stroke="#0a727a" stroke-width="2.1" stroke-linejoin="round"/><polygon points="16.9,7.0 22.8,2.4 22.8,16.6 16.9,22.2" fill="none" stroke="#26cdd5" stroke-width="0.8999999999999999" stroke-linejoin="round"/><polygon points="1.9,5.6 16.9,7.0 16.9,22.2 1.9,20.4" fill="#fff" stroke="#0a727a" stroke-width="2.1" stroke-linejoin="round"/><polygon points="1.9,5.6 16.9,7.0 16.9,22.2 1.9,20.4" fill="none" stroke="#26cdd5" stroke-width="0.8999999999999999" stroke-linejoin="round"/><ellipse cx="6.200" cy="16.800" rx="1.900" ry="1" transform="rotate(-32 6.200 16.800)" fill="#0a727a"/><ellipse cx="10.800" cy="11.200" rx="1.100" ry="1.900" fill="none" stroke="#0a727a" stroke-width=".9"/><ellipse cx="20" cy="15.500" rx="1.500" ry=".9" transform="rotate(-35 20 15.500)" fill="#0a727a"/></svg>
<svg style="left:438.0px;top:104.0px" width="24" height="24" viewBox="0 0 24 24"><polygon points="1.9,5.6 16.9,7.0 22.8,2.4 7.5,1.4" fill="#fff" stroke="#0a727a" stroke-width="2.1" stroke-linejoin="round"/><polygon points="1.9,5.6 16.9,7.0 22.8,2.4 7.5,1.4" fill="none" stroke="#26cdd5" stroke-width="0.8999999999999999" stroke-linejoin="round"/><polygon points="16.9,7.0 22.8,2.4 22.8,16.6 16.9,22.2" fill="#12a3ab" stroke="#0a727a" stroke-width="2.1" stroke-linejoin="round"/><polygon points="16.9,7.0 22.8,2.4 22.8,16.6 16.9,22.2" fill="none" stroke="#26cdd5" stroke-width="0.8999999999999999" stroke-linejoin="round"/><polygon points="1.9,5.6 16.9,7.0 16.9,22.2 1.9,20.4" fill="#fff" stroke="#0a727a" stroke-width="2.1" stroke-linejoin="round"/><polygon points="1.9,5.6 16.9,7.0 16.9,22.2 1.9,20.4" fill="none" stroke="#26cdd5" stroke-width="0.8999999999999999" stroke-linejoin="round"/><ellipse cx="6.200" cy="16.800" rx="1.900" ry="1" transform="rotate(-32 6.200 16.800)" fill="#0a727a"/><ellipse cx="10.800" cy="11.200" rx="1.100" ry="1.900" fill="none" stroke="#0a727a" stroke-width=".9"/><path d="M12.500 13.500h2.500" stroke="#0a727a" stroke-width="1.300"/></svg>
<div style="left:470px;top:107px;width:1px;height:19px;background:#d0d0d0;"></div>
<div style="left:471px;top:107px;width:1px;height:19px;background:#fbfbfb;"></div>
<svg style="left:477.5px;top:104.0px" width="24" height="24" viewBox="0 0 24 24"><polygon points="1.9,5.6 7.5,1.4 22.8,2.4 22.8,16.6 16.9,22.2 1.9,20.4" fill="#ffffff"/><polygon points="7.5,1.4 22.8,2.4 22.8,16.6 7.5,15.5" fill="#26cdd5" stroke="#0a727a" stroke-width="1.7000000000000002" stroke-linejoin="round"/><polygon points="7.5,1.4 22.8,2.4 22.8,16.6 7.5,15.5" fill="none" stroke="#26cdd5" stroke-width="0.5" stroke-linejoin="round"/><polygon points="7.5,1.4 22.8,2.4 22.8,16.6 7.5,15.5" fill="none" stroke="#0a727a" stroke-width="1.7000000000000002" stroke-linejoin="round"/><polygon points="7.5,1.4 22.8,2.4 22.8,16.6 7.5,15.5" fill="none" stroke="#26cdd5" stroke-width="0.5" stroke-linejoin="round"/><path d="M1.9 5.6L7.5 1.4" stroke="#0a727a" stroke-width="2"/><path d="M1.9 5.6L7.5 1.4" stroke="#26cdd5" stroke-width=".8"/><path d="M16.9 7.0L22.8 2.4" stroke="#0a727a" stroke-width="2"/><path d="M16.9 7.0L22.8 2.4" stroke="#26cdd5" stroke-width=".8"/><path d="M16.9 22.2L22.8 16.6" stroke="#0a727a" stroke-width="2"/><path d="M16.9 22.2L22.8 16.6" stroke="#26cdd5" stroke-width=".8"/><path d="M1.9 20.4L7.5 15.5" stroke="#0a727a" stroke-width="2"/><path d="M1.9 20.4L7.5 15.5" stroke="#26cdd5" stroke-width=".8"/><polygon points="1.9,5.6 16.9,7.0 16.9,22.2 1.9,20.4" fill="none" stroke="#0a727a" stroke-width="2.1" stroke-linejoin="round"/><polygon points="1.9,5.6 16.9,7.0 16.9,22.2 1.9,20.4" fill="none" stroke="#26cdd5" stroke-width="0.8999999999999999" stroke-linejoin="round"/><ellipse cx="5.500" cy="16.500" rx="1.900" ry="1" transform="rotate(-32 5.500 16.500)" fill="#0a727a"/></svg>
<svg style="left:511.0px;top:104.0px" width="24" height="24" viewBox="0 0 24 24"><polygon points="1.9,5.6 7.5,1.4 22.8,2.4 22.8,16.6 16.9,22.2 1.9,20.4" fill="#ffffff"/><polygon points="1.9,20.4 16.9,22.2 22.8,16.6 7.5,15.5" fill="#26cdd5" stroke="#0a727a" stroke-width="1.7000000000000002" stroke-linejoin="round"/><polygon points="1.9,20.4 16.9,22.2 22.8,16.6 7.5,15.5" fill="none" stroke="#26cdd5" stroke-width="0.5" stroke-linejoin="round"/><polygon points="7.5,1.4 22.8,2.4 22.8,16.6 7.5,15.5" fill="none" stroke="#0a727a" stroke-width="1.7000000000000002" stroke-linejoin="round"/><polygon points="7.5,1.4 22.8,2.4 22.8,16.6 7.5,15.5" fill="none" stroke="#26cdd5" stroke-width="0.5" stroke-linejoin="round"/><path d="M1.9 5.6L7.5 1.4" stroke="#0a727a" stroke-width="2"/><path d="M1.9 5.6L7.5 1.4" stroke="#26cdd5" stroke-width=".8"/><path d="M16.9 7.0L22.8 2.4" stroke="#0a727a" stroke-width="2"/><path d="M16.9 7.0L22.8 2.4" stroke="#26cdd5" stroke-width=".8"/><path d="M16.9 22.2L22.8 16.6" stroke="#0a727a" stroke-width="2"/><path d="M16.9 22.2L22.8 16.6" stroke="#26cdd5" stroke-width=".8"/><path d="M1.9 20.4L7.5 15.5" stroke="#0a727a" stroke-width="2"/><path d="M1.9 20.4L7.5 15.5" stroke="#26cdd5" stroke-width=".8"/><polygon points="1.9,5.6 16.9,7.0 16.9,22.2 1.9,20.4" fill="none" stroke="#0a727a" stroke-width="2.1" stroke-linejoin="round"/><polygon points="1.9,5.6 16.9,7.0 16.9,22.2 1.9,20.4" fill="none" stroke="#26cdd5" stroke-width="0.8999999999999999" stroke-linejoin="round"/><ellipse cx="10.500" cy="11" rx="1.100" ry="1.900" fill="none" stroke="#0a727a" stroke-width=".9"/></svg>
<svg style="left:544.0px;top:104.0px" width="24" height="24" viewBox="0 0 24 24"><polygon points="1.9,5.6 7.5,1.4 22.8,2.4 22.8,16.6 16.9,22.2 1.9,20.4" fill="#ffffff"/><polygon points="1.9,5.6 7.5,1.4 7.5,15.5 1.9,20.4" fill="#12a3ab" stroke="#0a727a" stroke-width="1.7000000000000002" stroke-linejoin="round"/><polygon points="1.9,5.6 7.5,1.4 7.5,15.5 1.9,20.4" fill="none" stroke="#26cdd5" stroke-width="0.5" stroke-linejoin="round"/><polygon points="7.5,1.4 22.8,2.4 22.8,16.6 7.5,15.5" fill="none" stroke="#0a727a" stroke-width="1.7000000000000002" stroke-linejoin="round"/><polygon points="7.5,1.4 22.8,2.4 22.8,16.6 7.5,15.5" fill="none" stroke="#26cdd5" stroke-width="0.5" stroke-linejoin="round"/><path d="M1.9 5.6L7.5 1.4" stroke="#0a727a" stroke-width="2"/><path d="M1.9 5.6L7.5 1.4" stroke="#26cdd5" stroke-width=".8"/><path d="M16.9 7.0L22.8 2.4" stroke="#0a727a" stroke-width="2"/><path d="M16.9 7.0L22.8 2.4" stroke="#26cdd5" stroke-width=".8"/><path d="M16.9 22.2L22.8 16.6" stroke="#0a727a" stroke-width="2"/><path d="M16.9 22.2L22.8 16.6" stroke="#26cdd5" stroke-width=".8"/><path d="M1.9 20.4L7.5 15.5" stroke="#0a727a" stroke-width="2"/><path d="M1.9 20.4L7.5 15.5" stroke="#26cdd5" stroke-width=".8"/><polygon points="1.9,5.6 16.9,7.0 16.9,22.2 1.9,20.4" fill="none" stroke="#0a727a" stroke-width="2.1" stroke-linejoin="round"/><polygon points="1.9,5.6 16.9,7.0 16.9,22.2 1.9,20.4" fill="none" stroke="#26cdd5" stroke-width="0.8999999999999999" stroke-linejoin="round"/></svg>
<div style="left:576px;top:107px;width:1px;height:19px;background:#d0d0d0;"></div>
<div style="left:577px;top:107px;width:1px;height:19px;background:#fbfbfb;"></div>
<svg style="left:583.0px;top:104.0px" width="24" height="24" viewBox="0 0 24 24"><path d="M2 5l5-4 14.500 13v7l-3.500 2.500z" fill="#26cdd5" stroke="#0a727a" stroke-width="1"/><path d="M18 23.500v-7l3.500-2.500" stroke="#0a727a" stroke-width=".9" fill="none"/><path d="M7 4l-1.500 1.500M9.500 6.300l-2.200 2M12 8.500l-1.500 1.500M14.500 10.800l-2.200 2M17 13l-1.500 1.500" stroke="#0a727a" stroke-width="1"/></svg>
<svg style="left:621px;top:108px;" width="5" height="18" viewBox="0 0 5 18"><rect x="0" y="0" width="1" height="1" fill="#b4b4b4"/><rect x="0" y="3" width="1" height="1" fill="#b4b4b4"/><rect x="0" y="6" width="1" height="1" fill="#b4b4b4"/><rect x="0" y="9" width="1" height="1" fill="#b4b4b4"/><rect x="0" y="12" width="1" height="1" fill="#b4b4b4"/><rect x="0" y="15" width="1" height="1" fill="#b4b4b4"/><rect x="3" y="0" width="1" height="1" fill="#b4b4b4"/><rect x="3" y="3" width="1" height="1" fill="#b4b4b4"/><rect x="3" y="6" width="1" height="1" fill="#b4b4b4"/><rect x="3" y="9" width="1" height="1" fill="#b4b4b4"/><rect x="3" y="12" width="1" height="1" fill="#b4b4b4"/><rect x="3" y="15" width="1" height="1" fill="#b4b4b4"/></svg>
<svg style="left:633.5px;top:104.0px" width="24" height="24" viewBox="0 0 24 24"><path d="M2.700 8.500L11.100 1.400L15.700 3.900V8.500L20.200 11.400V16.400L13.200 22.200L2.700 18.500Z" fill="#e9d821" stroke="#5c4e00" stroke-width="1" stroke-linejoin="round"/><path d="M2.700 8.500L11.100 1.400L15.700 3.900L7.800 10.500Z" fill="#fbf26a"/><path d="M7.800 15.500L15.700 8.500L20.200 11.400L13.200 17.500Z" fill="#fbf26a"/><path d="M7.800 10.500L15.700 3.900V8.500L7.800 15.500Z" fill="#d2bd08"/><path d="M13.200 17.500L20.200 11.400V16.400L13.200 22.200Z" fill="#c8b200"/><path d="M2.700 8.500L7.800 10.500L15.700 3.900M7.800 10.500V15.500M2.700 13.500L7.800 15.500L15.700 8.500M7.800 15.500L13.200 17.500L20.200 11.400M13.200 17.500V22.200" fill="none" stroke="#5c4e00" stroke-width=".8"/></svg>
<svg style="left:666.0px;top:104.0px" width="24" height="24" viewBox="0 0 24 24"><path d="M1.500 22.500v-19.500q0-1.500 1.500-1.500h6l2 2.500h10.500q1.500 0 1.500 1.500v17z" fill="#dfd3c8" stroke="#b8a898" stroke-width="1"/><path d="M1.500 7.500h21" stroke="#c8b8a8" stroke-width=".8"/></svg>
<svg style="left:699.0px;top:104.0px" width="24" height="24" viewBox="0 0 24 24"><path d="M11.400 3H6.500Q3.500 3 3.500 6V17.600Q3.500 20.600 6.500 20.600H16.800Q19.800 20.600 19.800 17.600V15.600" fill="none" stroke="#1d3d6e" stroke-width="3.400" stroke-linecap="round"/><path d="M11.400 3H6.500Q3.500 3 3.500 6V17.600Q3.500 20.600 6.500 20.600H16.800Q19.800 20.600 19.800 17.600V15.600" fill="none" stroke="#3f74bd" stroke-width="1.700" stroke-linecap="round"/><path d="M8.900 16.500C8.500 10.500 11.500 6.800 16 6.500V2.700L22.200 8.300L16 13.500V10C12.500 10 10.500 12 8.900 16.500Z" fill="#5dba2c" stroke="#2c7a0e" stroke-width=".9" stroke-linejoin="round"/></svg>
<svg style="left:732.5px;top:104.0px" width="24" height="24" viewBox="0 0 24 24"><g transform="translate(-1.500,0)"><path d="M11.400 3H6.500Q3.500 3 3.500 6V17.600Q3.500 20.600 6.500 20.600H16.800Q19.800 20.600 19.800 17.600V15.600" fill="none" stroke="#1d3d6e" stroke-width="3.400" stroke-linecap="round"/><path d="M11.400 3H6.500Q3.500 3 3.500 6V17.600Q3.500 20.600 6.500 20.600H16.800Q19.800 20.600 19.800 17.600V15.600" fill="none" stroke="#3f74bd" stroke-width="1.700" stroke-linecap="round"/></g><g transform="translate(-3,0)"><path d="M8.900 16.500C8.500 10.500 11.500 6.800 16 6.500V2.700L22.200 8.300L16 13.500V10C12.500 10 10.500 12 8.900 16.500Z" fill="#5dba2c" stroke="#2c7a0e" stroke-width=".9" stroke-linejoin="round"/></g><path d="M18.500 3l5 5.500-5 5.500" fill="none" stroke="#4cae1e" stroke-width="2"/></svg>
<svg style="left:762px;top:114px;" width="8" height="5" viewBox="0 0 8 5"><path d="M0 0h8l-4 4.500z" fill="#5a5a5a"/></svg>
<svg style="left:781px;top:108px;" width="5" height="18" viewBox="0 0 5 18"><rect x="0" y="0" width="1" height="1" fill="#b4b4b4"/><rect x="0" y="3" width="1" height="1" fill="#b4b4b4"/><rect x="0" y="6" width="1" height="1" fill="#b4b4b4"/><rect x="0" y="9" width="1" height="1" fill="#b4b4b4"/><rect x="0" y="12" width="1" height="1" fill="#b4b4b4"/><rect x="0" y="15" width="1" height="1" fill="#b4b4b4"/><rect x="3" y="0" width="1" height="1" fill="#b4b4b4"/><rect x="3" y="3" width="1" height="1" fill="#b4b4b4"/><rect x="3" y="6" width="1" height="1" fill="#b4b4b4"/><rect x="3" y="9" width="1" height="1" fill="#b4b4b4"/><rect x="3" y="12" width="1" height="1" fill="#b4b4b4"/><rect x="3" y="15" width="1" height="1" fill="#b4b4b4"/></svg>
<div style="left:789px;top:104px;width:80px;height:24px;background:linear-gradient(#ffffff,#ebebeb);border:1px solid #b4b4b4;border-radius:3px;"></div>
<svg style="left:806px;top:108px;" width="16" height="16" viewBox="0 0 16 16"><path d="M3 4.500l9-2.500v10.500l-9 2.500z" fill="#26cdd5" stroke="#0a727a" stroke-width=".8"/><path d="M5.500 6.300l4.500-1.300v5.500l-4.500 1.300z" fill="#fff" stroke="#0a727a" stroke-width=".6"/><path d="M1 4l3-.8M12 1l3-.8M1 15.500l3-.8M12 13l3-.8M3 1v16M12 0v16" stroke="#556" stroke-width=".7"/></svg>
<span class="t" id="t13" style="left:823px;top:110.00px;font-size:13px;line-height:13px;color:#000;letter-spacing:0.083px;">Auto</span>
<svg style="left:876px;top:110px;" width="17" height="11" viewBox="0 0 17 11"><path d="M.5 9q4-1 6-3.500q3-4.500 9-5q1 3-1.500 5.500q-3 2.500-7 2.500q-3 1.500-6.500 .5z" fill="#26cdd5" stroke="#0a727a" stroke-width=".8"/><path d="M6.500 5.500l1.500 3" stroke="#0a727a" stroke-width=".8"/></svg>
<div style="left:905px;top:108px;width:16px;height:16px;background:#1a1a1a;"></div>
<div style="left:934px;top:108px;width:16px;height:16px;background:#c9c9c9;"></div>
<div style="left:957px;top:105px;width:62px;height:22px;background:#fff;border:1px solid #b4b4b4;border-radius:3px;"></div>
<div style="left:1004px;top:106px;width:14px;height:20px;background:linear-gradient(#fdfdfd,#ededed);border-left:1px solid #c4c4c4;border-radius:0 3px 3px 0;"></div>
<svg style="left:1007.5px;top:109.5px;" width="7" height="4.5" viewBox="0 0 7 4.5"><path d="M0 4.500l3.500-4.500 3.500 4.500z" fill="#4b4b4b"/></svg>
<svg style="left:1007.5px;top:118px;" width="7" height="4.5" viewBox="0 0 7 4.5"><path d="M0 0h7l-3.500 4.500z" fill="#4b4b4b"/></svg>
<span class="t" id="t14" style="left:962.5px;top:110.00px;font-size:13px;line-height:13px;color:#000;letter-spacing:0.116px;">1px</span>
<div style="left:1020.5px;top:105px;width:73px;height:22px;background:#fff;border:1px solid #b4b4b4;border-radius:3px;"></div>
<div style="left:1078.5px;top:106px;width:14px;height:20px;background:linear-gradient(#fdfdfd,#ededed);border-left:1px solid #c4c4c4;border-radius:0 3px 3px 0;"></div>
<svg style="left:1082.0px;top:109.5px;" width="7" height="4.5" viewBox="0 0 7 4.5"><path d="M0 4.500l3.500-4.500 3.500 4.500z" fill="#4b4b4b"/></svg>
<svg style="left:1082.0px;top:118px;" width="7" height="4.5" viewBox="0 0 7 4.5"><path d="M0 0h7l-3.500 4.500z" fill="#4b4b4b"/></svg>
<span class="t" id="t15" style="left:1026.0px;top:110.00px;font-size:13px;line-height:13px;color:#000;letter-spacing:0.147px;">200.00</span>
<svg style="left:1110px;top:108.5px;" width="15" height="15" viewBox="0 0 15 15"><circle cx="7.500" cy="7.500" r="6" fill="none" stroke="#b00000" stroke-width="2"/><path d="M3.300 3.300l8.400 8.400" stroke="#b00000" stroke-width="2"/></svg>
<span class="t" id="t16" style="left:1127.5px;top:110.00px;font-size:13px;line-height:13px;color:#000;letter-spacing:-0.193px;">None</span>
<svg style="left:1181.5px;top:108px;" width="17" height="16" viewBox="0 0 17 16"><rect x=".5" y=".5" width="8" height="15" rx="1" fill="#9a9a9a" stroke="#6e6e6e"/><rect x="2" y="2" width="5" height="2.200" fill="#e03030"/><rect x="2" y="5.300" width="5" height="2.200" fill="#f0d020"/><rect x="2" y="8.600" width="5" height="2.200" fill="#d0d0d0"/><rect x="2" y="11.900" width="5" height="2.200" fill="#60d030"/><path d="M6 6h5v-3l5.500 5-5.500 5v-3h-5z" fill="#4a86d0" stroke="#1f4e96" stroke-width=".8"/></svg>
<svg style="left:6px;top:147px;" width="5" height="18" viewBox="0 0 5 18"><rect x="0" y="0" width="1" height="1" fill="#b4b4b4"/><rect x="0" y="3" width="1" height="1" fill="#b4b4b4"/><rect x="0" y="6" width="1" height="1" fill="#b4b4b4"/><rect x="0" y="9" width="1" height="1" fill="#b4b4b4"/><rect x="0" y="12" width="1" height="1" fill="#b4b4b4"/><rect x="0" y="15" width="1" height="1" fill="#b4b4b4"/><rect x="3" y="0" width="1" height="1" fill="#b4b4b4"/><rect x="3" y="3" width="1" height="1" fill="#b4b4b4"/><rect x="3" y="6" width="1" height="1" fill="#b4b4b4"/><rect x="3" y="9" width="1" height="1" fill="#b4b4b4"/><rect x="3" y="12" width="1" height="1" fill="#b4b4b4"/><rect x="3" y="15" width="1" height="1" fill="#b4b4b4"/></svg>
<svg style="left:18.0px;top:143.0px" width="24" height="24" viewBox="0 0 24 24"><path d="M12 1l4.200 4.500h-2.700v5h5v-2.700l4.500 4.200-4.500 4.200v-2.700h-5v5h2.700l-4.200 4.500-4.200-4.500h2.700v-5h-5v2.700l-4.500-4.200 4.500-4.200v2.700h5v-5h-2.700z" fill="#3f78c3" stroke="#1a3a6a" stroke-width="1" /></svg>
<svg style="left:51.0px;top:143.0px" width="24" height="24" viewBox="0 0 24 24"><path d="M12.500 1.500l-7 4 7 4.500v-2.800a5.600 5.600 0 1 1-6.500 5.300h-3.700a9.300 9.300 0 1 0 10.200-9z" fill="#3f78c3" stroke="#1a3a6a" stroke-width="1" /></svg>
<svg style="left:84.0px;top:143.0px" width="24" height="24" viewBox="0 0 24 24"><rect x="2" y="2" width="20" height="20" fill="none" stroke="#1a3a6a" stroke-width="3.400" stroke-dasharray="3 1.800"/><rect x="2" y="2" width="20" height="20" fill="none" stroke="#3f78c3" stroke-width="1.800" stroke-dasharray="3 1.800"/><rect x="2.500" y="12.500" width="9" height="9" fill="#fff" stroke="#1a3a6a" stroke-width="3"/><rect x="2.500" y="12.500" width="9" height="9" fill="none" stroke="#3f78c3" stroke-width="1.400"/><path d="M12 12l5-5-2-2h6v6l-2-2-5 5z" fill="#3f78c3" stroke="#1a3a6a" stroke-width="1" /></svg>
<svg style="left:117.0px;top:143.0px" width="24" height="24" viewBox="0 0 24 24"><path d="M9.500 4.500v15h-8z" fill="#3f78c3" stroke="#1a3a6a" stroke-width="1" /><path d="M14.500 4.500v15h8z" fill="#3f78c3" stroke="#1a3a6a" stroke-width="1" /><path d="M12 1v22" stroke="#1a3a6a" stroke-width="3" stroke-dasharray="2.600 1.400"/><path d="M12 1v22" stroke="#6b9ada" stroke-width="1.400" stroke-dasharray="2.600 1.400"/></svg>
<svg style="left:149.5px;top:143.0px" width="24" height="24" viewBox="0 0 24 24"><path d="M2 6.500c3-3.500 7-4.500 19-4.500v14c0 4-3 6.500-8 6.500" fill="none" stroke="#1a3a6a" stroke-width="3.600"/><path d="M2 6.500c3-3.500 7-4.500 19-4.500v14c0 4-3 6.500-8 6.500" fill="none" stroke="#3f78c3" stroke-width="2"/><path d="M6 11c2-2 5-3 10-3v7c0 2-1.500 3.500-4 3.500c-3 0-4-2-2.500-4" fill="none" stroke="#1a3a6a" stroke-width="3"/><path d="M6 11c2-2 5-3 10-3v7c0 2-1.500 3.500-4 3.500c-3 0-4-2-2.500-4" fill="none" stroke="#3f78c3" stroke-width="1.500"/></svg>
<svg style="left:183.0px;top:143.0px" width="24" height="24" viewBox="0 0 24 24"><path d="M12 1.500v21" stroke="#1a3a6a" stroke-width="3.600"/><path d="M12 1.500v21" stroke="#3f78c3" stroke-width="2"/><path d="M.8 12l5-4.500v3h3.700v3h-3.700v3z" fill="#3f78c3" stroke="#1a3a6a" stroke-width="1" /><path d="M23.200 12l-5-4.500v3h-3.700v3h3.700v3z" fill="#3f78c3" stroke="#1a3a6a" stroke-width="1" /></svg>
<svg style="left:216.5px;top:143.0px" width="24" height="24" viewBox="0 0 24 24"><rect x="2" y="2.500" width="10.500" height="19" fill="#fff" stroke="#1a3a6a" stroke-width="3.200"/><rect x="2" y="2.500" width="10.500" height="19" fill="none" stroke="#3f78c3" stroke-width="1.600"/><path d="M13.500 3l9.500 18.500h-9.500" fill="#d8e4f5" stroke="#1a3a6a" stroke-width="1"/><path d="M14 4l8.500 17h-8" fill="none" stroke="#3f78c3" stroke-width="1.800" stroke-dasharray="2 1.500"/></svg>
<div style="left:248px;top:146px;width:1px;height:19px;background:#d0d0d0;"></div>
<div style="left:249px;top:146px;width:1px;height:19px;background:#fbfbfb;"></div>
<svg style="left:256.0px;top:143.0px" width="24" height="24" viewBox="0 0 24 24"><path d="M12 1.500C8 1.500 6 3 5.500 5C3.500 6 1.500 10 .8 13.500C.5 15.200 1.700 16 2.700 15L4 13.200C4.500 17.500 8 22.500 12 22.500C16 22.500 19.500 17.500 20 13.200L21.300 15C22.300 16 23.500 15.200 23.200 13.500C22.500 10 20.500 6 18.500 5C18 3 16 1.500 12 1.500Z" fill="#3f78c3" stroke="#1a3a6a" stroke-width="1"/><path d="M6 5.500c2-2 10-2 12 0c-1 2-11 2-12 0z" fill="#6b9ada" opacity=".6"/><ellipse cx="12.500" cy="12" rx="4.400" ry="2.200" fill="#f2f5fa"/><ellipse cx="12.800" cy="12" rx="1.900" ry="1.300" fill="#111"/><path d="M10.500 19.500l1.500 1.200 1.500-1.200" stroke="#1a3a6a" stroke-width="1" fill="none"/></svg>
<svg style="left:289.0px;top:143.0px" width="24" height="24" viewBox="0 0 24 24"><rect x="1.5" y="1.5" width="5.500" height="9" fill="#3f78c3" stroke="#1a3a6a" stroke-width=".9"/><rect x="1.5" y="13.5" width="5.500" height="9" fill="#3f78c3" stroke="#1a3a6a" stroke-width=".9"/><rect x="9.2" y="1.5" width="5.500" height="9" fill="#3f78c3" stroke="#1a3a6a" stroke-width=".9"/><rect x="9.2" y="13.5" width="5.500" height="9" fill="#3f78c3" stroke="#1a3a6a" stroke-width=".9"/><rect x="16.9" y="1.5" width="5.500" height="9" fill="#3f78c3" stroke="#1a3a6a" stroke-width=".9"/><rect x="16.9" y="13.5" width="5.500" height="9" fill="#3f78c3" stroke="#1a3a6a" stroke-width=".9"/></svg>
<svg style="left:319px;top:153px;" width="8" height="5" viewBox="0 0 8 5"><path d="M0 0h8l-4 4.500z" fill="#5a5a5a"/></svg>
<div style="left:334px;top:146px;width:1px;height:19px;background:#d0d0d0;"></div>
<div style="left:335px;top:146px;width:1px;height:19px;background:#fbfbfb;"></div>
<svg style="left:341.0px;top:143.0px" width="24" height="24" viewBox="0 0 24 24"><path d="M16 1L21.500 17L7 22L12 13Z" fill="#3f78c3" stroke="#1a3a6a" stroke-width="1" /><path d="M1.300 6.500l3.200-3.200 8.500 8.700-3.200 3.200z" fill="#3f78c3" stroke="#1a3a6a" stroke-width=".9"/><path d="M2.400 5.400l8.500 8.700M3.500 4.300l8.500 8.700" stroke="#1a3a6a" stroke-width=".6"/><path d="M9.800 15.200l3.200-3.200 1.700 4.900z" fill="#f2f2f2" stroke="#1a3a6a" stroke-width=".7"/><path d="M13.600 15.200l1.100 1.700-1.900-.7z" fill="#111"/></svg>
<svg style="left:374.5px;top:143.0px" width="24" height="24" viewBox="0 0 24 24"><path d="M15.500 1.500L16.800 13L22 17L6 21.800" stroke="#1a3a6a" stroke-width="1.200" fill="none"/><rect x="13.7" y="-0.30000000000000004" width="3.600" height="3.600" fill="#3f78c3" stroke="#1a3a6a" stroke-width=".8"/><rect x="15.0" y="11.2" width="3.600" height="3.600" fill="#3f78c3" stroke="#1a3a6a" stroke-width=".8"/><rect x="20.2" y="15.2" width="3.600" height="3.600" fill="#3f78c3" stroke="#1a3a6a" stroke-width=".8"/><rect x="4.2" y="20.0" width="3.600" height="3.600" fill="#3f78c3" stroke="#1a3a6a" stroke-width=".8"/><path d="M.8 6l3-3 7.700 8-3 3z" fill="#3f78c3" stroke="#1a3a6a" stroke-width=".9"/><path d="M1.800 5l7.700 8M2.800 4l7.700 8" stroke="#1a3a6a" stroke-width=".6"/><path d="M8.500 14l3-3 1.600 4.600z" fill="#f2f2f2" stroke="#1a3a6a" stroke-width=".7"/><path d="M12 14l1.100 1.600-1.800-.6z" fill="#111"/></svg>
<div style="left:406px;top:146px;width:1px;height:19px;background:#d0d0d0;"></div>
<div style="left:407px;top:146px;width:1px;height:19px;background:#fbfbfb;"></div>
<svg style="left:414.0px;top:143.0px" width="24" height="24" viewBox="0 0 24 24"><path d="M1.500 12h21" stroke="#8a8a8a" stroke-width="3.400"/><path d="M1.500 12h21" stroke="#d8d8d8" stroke-width="1.800"/><path d="M12 12l-5.500-4v8z" fill="#3f78c3" stroke="#1a3a6a" stroke-width="1" /><path d="M12 12l5.500-4v8z" fill="#3f78c3" stroke="#1a3a6a" stroke-width="1" /></svg>
<svg style="left:447.0px;top:143.0px" width="24" height="24" viewBox="0 0 24 24"><path d="M1.500 12h21" stroke="#8a8a8a" stroke-width="3.400"/><path d="M1.500 12h21" stroke="#d8d8d8" stroke-width="1.800"/><path d="M9.500 1.500v21M14.500 1.500v21" stroke="#1a3a6a" stroke-width="3.400"/><path d="M9.500 1.500v21M14.500 1.500v21" stroke="#3f78c3" stroke-width="1.800"/></svg>
<svg style="left:480.0px;top:143.0px" width="24" height="24" viewBox="0 0 24 24"><path d="M12 1.500l10 10.500h-5.500v10.500h-9v-10.500h-5.500z" fill="#3f78c3" stroke="#1a3a6a" stroke-width="1" /></svg>
<svg style="left:513.0px;top:143.0px" width="24" height="24" viewBox="0 0 24 24"><g transform="translate(0,24) scale(1,-1)"><path d="M12 1.500l10 10.500h-5.500v10.500h-9v-10.500h-5.500z" fill="#3f78c3" stroke="#1a3a6a" stroke-width="1" /></g></svg>
<div style="left:545px;top:146px;width:1px;height:19px;background:#d0d0d0;"></div>
<div style="left:546px;top:146px;width:1px;height:19px;background:#fbfbfb;"></div>
<svg style="left:553.0px;top:143.0px" width="24" height="24" viewBox="0 0 24 24"><path d="M2 8l6.500-5.500 6 5.500 7.500-6" fill="none" stroke="#555" stroke-width="3"/><path d="M2 8l6.500-5.500 6 5.500 7.500-6" fill="none" stroke="#f2f2f2" stroke-width="1.500"/><path d="M2 21c3-6 6-7 9.500-4s6.500 2.500 10.500-4" fill="none" stroke="#555" stroke-width="3"/><path d="M2 21c3-6 6-7 9.500-4s6.500 2.500 10.500-4" fill="none" stroke="#f2f2f2" stroke-width="1.500"/><path d="M7 10h10l-5 6z" fill="#3f78c3" stroke="#1a3a6a" stroke-width="1" /></svg>
<svg style="left:586.0px;top:143.0px" width="24" height="24" viewBox="0 0 24 24"><path d="M3 6l4-4 8-.5 6 3-2 4.500-9 1z" fill="none" stroke="#3f78c3" stroke-width="2.200"/><ellipse cx="16" cy="5.500" rx="4.500" ry="2.500" fill="#fff" stroke="#3f78c3" stroke-width="1.600"/><path d="M3 18l4-3.500 8-.5 6 3-2 4.500-9 1z" fill="none" stroke="#d01010" stroke-width="2.200"/><ellipse cx="16" cy="18" rx="4" ry="2.300" fill="#fff" stroke="#d01010" stroke-width="1.600"/><path d="M8.500 6.500l3.500 4h-2v6h-3v-6h-2z" fill="#3f78c3" stroke="#1a3a6a" stroke-width="1" /><path d="M16.500 17.500l3.500-4h-2v-6h-3v6h-2z" fill="#3f78c3" stroke="#1a3a6a" stroke-width="1" /></svg>
<svg style="left:619.0px;top:143.0px" width="24" height="24" viewBox="0 0 24 24"><path d="M2 12l19 9" stroke="#666" stroke-width="3.400" stroke-linecap="round"/><path d="M2 12l19 9" stroke="#f0f0f0" stroke-width="1.800" stroke-linecap="round"/><path d="M7.500 3L14.500 5.500L15.500 2.500L22.500 10L12.500 13L13.500 10L6.500 7.500Z" fill="#3f78c3" stroke="#1a3a6a" stroke-width="1" /></svg>
<svg style="left:652.0px;top:143.0px" width="24" height="24" viewBox="0 0 24 24"><path d="M10.500 2v11l-8-5.500z" fill="#f3d512" stroke="#6b5a00" stroke-width=".9"/><path d="M13.500 2v11l8-5.500z" fill="#f3d512" stroke="#6b5a00" stroke-width=".9"/><path d="M12 1v14" stroke="#fff" stroke-width="1"/><path d="M2.500 14.500c1.500 5 6 7.500 10.500 7.500c3 0 5-1 6.500-2.500l2.500 2v-7.500h-7.500l2.500 2.500c-1 1-2.500 1.500-4 1.500c-3 0-5.500-1.500-6.500-4.500z" fill="#3f78c3" stroke="#1a3a6a" stroke-width="1" /></svg>
<div style="left:684px;top:146px;width:1px;height:19px;background:#d0d0d0;"></div>
<div style="left:685px;top:146px;width:1px;height:19px;background:#fbfbfb;"></div>
<svg style="left:692.0px;top:143.0px" width="24" height="24" viewBox="0 0 24 24"><path d="M2 17l7-3.500 13 2-7.500 4.500z" fill="#fff" stroke="#444" stroke-width=".9"/><path d="M5 17l4.500-2 9 1.500-5 2.500z" fill="none" stroke="#666" stroke-width=".7"/><path d="M2 6l8-4.500 12.500 2.500v8.500l-8 4-12.500-3z" fill="#3f78c3" stroke="#1a3a6a" stroke-width="1"/><path d="M2 6l12.500 3 8-5M14.500 9v8" stroke="#1a3a6a" stroke-width=".9" fill="none"/><path d="M2 6l8-4.500 12.500 2.500-8 5z" fill="#6b9ada" opacity=".7"/></svg>
<svg style="left:728px;top:147px;" width="5" height="18" viewBox="0 0 5 18"><rect x="0" y="0" width="1" height="1" fill="#b4b4b4"/><rect x="0" y="3" width="1" height="1" fill="#b4b4b4"/><rect x="0" y="6" width="1" height="1" fill="#b4b4b4"/><rect x="0" y="9" width="1" height="1" fill="#b4b4b4"/><rect x="0" y="12" width="1" height="1" fill="#b4b4b4"/><rect x="0" y="15" width="1" height="1" fill="#b4b4b4"/><rect x="3" y="0" width="1" height="1" fill="#b4b4b4"/><rect x="3" y="3" width="1" height="1" fill="#b4b4b4"/><rect x="3" y="6" width="1" height="1" fill="#b4b4b4"/><rect x="3" y="9" width="1" height="1" fill="#b4b4b4"/><rect x="3" y="12" width="1" height="1" fill="#b4b4b4"/><rect x="3" y="15" width="1" height="1" fill="#b4b4b4"/></svg>
<svg style="left:741.5px;top:143.0px" width="24" height="24" viewBox="0 0 24 24"><path d="M1 15.6l8.500-5.800 13 5.500-9 6.300z" fill="#eef0ec" stroke="#5a5a5a" stroke-width="1" stroke-linejoin="round"/><path d="M1 11.3l8.500-5.800 13 5.500-9 6.300z" fill="#eef0ec" stroke="#5a5a5a" stroke-width="1" stroke-linejoin="round"/><path d="M1 7l8.500-5.800 13 5.500-9 6.300z" fill="#eef0ec" stroke="#5a5a5a" stroke-width="1" stroke-linejoin="round"/></svg>
<svg style="left:774.0px;top:143.0px" width="24" height="24" viewBox="0 0 24 24"><path d="M4 6l14-4.500v16l-14 5z" fill="#3f78c3" stroke="#1a3a6a" stroke-width="1"/><path d="M7.500 9l7-2.500v8l-7 2.500z" fill="#fff" stroke="#1a3a6a" stroke-width=".8"/><path d="M1 6.500l4-1.300M17 1.500l5-1.500M1 23l4-1.300M17 18l5-1.800M4 2v21M18 .5v22" stroke="#334" stroke-width=".9"/></svg>
<svg style="left:807.5px;top:143.0px" width="24" height="24" viewBox="0 0 24 24"><rect x="2" y="2" width="13" height="13" fill="#f4f4f4" stroke="#7a7a7a" stroke-width="2.200"/><rect x="9.500" y="9.500" width="12.500" height="12.500" fill="#3f78c3" stroke="#7a7a7a" stroke-width="2.200"/><rect x="9.500" y="9.500" width="5.500" height="5.500" fill="none" stroke="#7a7a7a" stroke-width="1"/></svg>
<svg style="left:840.5px;top:143.0px" width="24" height="24" viewBox="0 0 24 24"><path d="M3.500 4v16h3M3.500 9h3M3.500 14.500h3" stroke="#888" stroke-width="1.300" fill="none"/><rect x="1.500" y="1.500" width="13" height="3.400" fill="#e6e6e0" stroke="#8a8a8a" stroke-width=".8"/><rect x="6.500" y="7.300" width="16" height="3.400" fill="#e6e6e0" stroke="#8a8a8a" stroke-width=".8"/><rect x="6.500" y="12.800" width="13" height="3.600" fill="#3f78c3" stroke="#1a3a6a" stroke-width=".8"/><rect x="6.500" y="18.500" width="16" height="3.400" fill="#e6e6e0" stroke="#8a8a8a" stroke-width=".8"/></svg>
<svg style="left:873.5px;top:143.0px" width="24" height="24" viewBox="0 0 24 24"><path d="M3.500 4v13h3M3.500 10.500h3" stroke="#888" stroke-width="1.300" fill="none"/><rect x="1.500" y="1.500" width="13" height="3.400" fill="#e6e6e0" stroke="#8a8a8a" stroke-width=".8"/><rect x="7.500" y="8.500" width="13" height="3.600" fill="#3f78c3" stroke="#1a3a6a" stroke-width=".8"/><rect x="7.500" y="15" width="13" height="3.600" fill="#3f78c3" stroke="#1a3a6a" stroke-width=".8"/><rect x="5.500" y="6.500" width="17" height="15" fill="none" stroke="#3f78c3" stroke-width="1.600" stroke-dasharray="2.200 1.600"/></svg>
<svg style="left:906.0px;top:143.0px" width="24" height="24" viewBox="0 0 24 24"><path d="M6.500 1v4.500h-4.500v3h4.500v4.500h3v-4.500h4.500v-3h-4.500v-4.500z" fill="#26cdd5" stroke="#0a727a" stroke-width="1" /><path d="M1.500 17.500q5-1 7.500-4q4-5 14-5.500q1 4-2.500 7.500q-4 3.500-9 3q-4 2-10-1z" fill="#26cdd5" stroke="#0a727a" stroke-width="1" /></svg>
<svg style="left:939.5px;top:143.0px" width="24" height="24" viewBox="0 0 24 24"><circle cx="12" cy="12" r="10.500" fill="#e4e4e4" stroke="#8a8a8a" stroke-width="1"/><circle cx="12" cy="12" r="9" fill="#f2f2f2"/><path d="M10 4.500h4v5.500h5.500v4h-5.500v5.500h-4v-5.500h-5.500v-4h5.500z" fill="#e01818" stroke="#8a0000" stroke-width=".8"/></svg>
<svg style="left:976px;top:147px;" width="5" height="18" viewBox="0 0 5 18"><rect x="0" y="0" width="1" height="1" fill="#b4b4b4"/><rect x="0" y="3" width="1" height="1" fill="#b4b4b4"/><rect x="0" y="6" width="1" height="1" fill="#b4b4b4"/><rect x="0" y="9" width="1" height="1" fill="#b4b4b4"/><rect x="0" y="12" width="1" height="1" fill="#b4b4b4"/><rect x="0" y="15" width="1" height="1" fill="#b4b4b4"/><rect x="3" y="0" width="1" height="1" fill="#b4b4b4"/><rect x="3" y="3" width="1" height="1" fill="#b4b4b4"/><rect x="3" y="6" width="1" height="1" fill="#b4b4b4"/><rect x="3" y="9" width="1" height="1" fill="#b4b4b4"/><rect x="3" y="12" width="1" height="1" fill="#b4b4b4"/><rect x="3" y="15" width="1" height="1" fill="#b4b4b4"/></svg>
<div style="left:984px;top:140px;width:32px;height:31px;background:linear-gradient(#d6d6d6,#dedede);border:1px solid #b4b4b4;border-radius:3px;"></div>
<svg style="left:988.0px;top:143.0px" width="24" height="24" viewBox="0 0 24 24"><path d="M7 12v-4.500a5 5 0 0 1 10 0v4.500" fill="none" stroke="#0a727a" stroke-width="4.200"/><path d="M7 12v-4.500a5 5 0 0 1 10 0v4.500" fill="none" stroke="#26cdd5" stroke-width="2.400"/><rect x="4" y="10.500" width="16" height="11.500" rx="1.500" fill="#26cdd5" stroke="#0a727a" stroke-width="1"/><path d="M5.500 14h13M5.500 16.500h13M5.500 19h13" stroke="#0a727a" stroke-width=".9" opacity=".7"/></svg>
<svg style="left:1021.0px;top:143.0px" width="24" height="24" viewBox="0 0 24 24"><path d="M7 17l14-13" stroke="#0a727a" stroke-width="4.400"/><path d="M7 17l14-13" stroke="#26cdd5" stroke-width="2.600"/><circle cx="5.500" cy="18.500" r="4.300" fill="#26cdd5" stroke="#0a727a" stroke-width="1"/></svg>
<svg style="left:1054.0px;top:143.0px" width="24" height="24" viewBox="0 0 24 24"><path d="M2 21l20-18" stroke="#0a727a" stroke-width="4.400"/><path d="M2 21l20-18" stroke="#26cdd5" stroke-width="2.600"/><circle cx="12" cy="12" r="4.600" fill="#26cdd5" stroke="#0a727a" stroke-width="1"/></svg>
<svg style="left:1087.0px;top:143.0px" width="24" height="24" viewBox="0 0 24 24"><circle cx="12" cy="12" r="8.500" fill="none" stroke="#0a727a" stroke-width="4.600"/><circle cx="12" cy="12" r="8.500" fill="none" stroke="#26cdd5" stroke-width="2.800"/><circle cx="12" cy="12" r="3.700" fill="#26cdd5" stroke="#0a727a" stroke-width="1"/></svg>
<svg style="left:1120.0px;top:143.0px" width="24" height="24" viewBox="0 0 24 24"><path d="M12 3l9 9-9 9-9-9z" fill="none" stroke="#0a727a" stroke-width="1.600"/><circle cx="12" cy="4" r="3.200" fill="#26cdd5" stroke="#0a727a" stroke-width="1"/><circle cx="20" cy="12" r="3.200" fill="#26cdd5" stroke="#0a727a" stroke-width="1"/><circle cx="12" cy="20" r="3.200" fill="#26cdd5" stroke="#0a727a" stroke-width="1"/><circle cx="4" cy="12" r="3.200" fill="#26cdd5" stroke="#0a727a" stroke-width="1"/></svg>
<svg style="left:1153.0px;top:143.0px" width="24" height="24" viewBox="0 0 24 24"><path d="M4.500 1.500l7.500 7.500 7.500-7.500 3 3-7.500 7.500 7.500 7.500-3 3-7.500-7.500-7.500 7.500-3-3 7.500-7.500-7.500-7.500z" fill="#26cdd5" stroke="#0a727a" stroke-width="1" /></svg>
<svg style="left:1186.0px;top:143.0px" width="24" height="24" viewBox="0 0 24 24"><path d="M10 3h4v13.500h9v4h-22v-4h9z" fill="#26cdd5" stroke="#0a727a" stroke-width="1" /></svg>
<svg style="left:1219.5px;top:143.0px" width="24" height="24" viewBox="0 0 24 24"><circle cx="4.5" cy="12" r="3" fill="#26cdd5" stroke="#0a727a" stroke-width="1"/><circle cx="12" cy="12" r="3" fill="#26cdd5" stroke="#0a727a" stroke-width="1"/><circle cx="19.5" cy="12" r="3" fill="#26cdd5" stroke="#0a727a" stroke-width="1"/></svg>
<svg style="left:1252.0px;top:143.0px" width="24" height="24" viewBox="0 0 24 24"><path d="M6 2l16 9.500-1.800 3-16-9.500z" fill="#26cdd5" stroke="#0a727a" stroke-width="1" /><path d="M2.500 9.500l16 9.500-1.800 3-16-9.500z" fill="#26cdd5" stroke="#0a727a" stroke-width="1" /></svg>
<svg style="left:1285.0px;top:143.0px" width="24" height="24" viewBox="0 0 24 24"><path d="M8 7l8-5.500 7 .5v10l-7 7h-8z" fill="#26cdd5" stroke="#0a727a" stroke-width="1"/><path d="M8 7h8.500v12M16.500 7l6.500-5" stroke="#0a727a" stroke-width=".9" fill="none"/><path d="M16.500 7l6.500-5v10l-6.500 7z" fill="#12a3ab"/><circle cx="5.500" cy="18.500" r="4.500" fill="#26cdd5" stroke="#0a727a" stroke-width="1"/></svg>
<div style="left:1314px;top:140px;width:32px;height:31px;background:linear-gradient(#d6d6d6,#dedede);border:1px solid #b4b4b4;border-radius:3px;"></div>
<svg style="left:1317.0px;top:143.0px" width="24" height="24" viewBox="0 0 24 24"><path d="M3.500 9l2-3 16 10-2 3z" fill="#26cdd5" stroke="#0a727a" stroke-width="1" /><circle cx="17" cy="5.500" r="3.300" fill="#26cdd5" stroke="#0a727a" stroke-width="1"/></svg>
<svg style="left:1351.0px;top:143.0px" width="24" height="24" viewBox="0 0 24 24"><path d="M10 3.500h4v6.500h6.500v4h-6.500v6.500h-4v-6.500h-6.500v-4h6.500z" fill="#26cdd5" stroke="#0a727a" stroke-width="1" /></svg>
<svg style="left:1384.0px;top:143.0px" width="24" height="24" viewBox="0 0 24 24"><path d="M8.500 2.500v19M15.500 2.500v19M2.500 8.500h19M2.500 15.500h19" stroke="#0a727a" stroke-width="3.600" stroke-linecap="round"/><path d="M8.500 2.500v19M15.500 2.500v19M2.500 8.500h19M2.500 15.500h19" stroke="#26cdd5" stroke-width="2" stroke-linecap="round"/></svg>
<svg style="left:1417.0px;top:143.0px" width="24" height="24" viewBox="0 0 24 24"><rect x="1" y="1" width="22" height="22" rx="1.500" fill="#26cdd5" stroke="#0a727a" stroke-width="1"/><circle cx="8" cy="15" r="3" fill="none" stroke="#0a727a" stroke-width="1"/></svg>
<svg style="left:1449.5px;top:143.0px" width="24" height="24" viewBox="0 0 24 24"><path d="M8.500 9.500h12v4M9.500 8.500v11.500h5" stroke="#0a727a" stroke-width="3" fill="none"/><path d="M9 9.500h11.500v3.500M9.500 9v11h4.500" stroke="#22dfe7" stroke-width="1.500" fill="none"/><text x="8.500" y="7.300" font-family="Liberation Sans" font-weight="bold" font-size="8.500" textLength="14" lengthAdjust="spacingAndGlyphs" fill="#0a727a" stroke="#0a727a" stroke-width=".5">1.00</text><text transform="translate(7.300,22.500) rotate(-90)" font-family="Liberation Sans" font-weight="bold" font-size="8.500" textLength="14" lengthAdjust="spacingAndGlyphs" fill="#0a727a" stroke="#0a727a" stroke-width=".5">1.00</text></svg>
<svg style="left:1483.5px;top:143.0px" width="24" height="24" viewBox="0 0 24 24"><path d="M5 1v22M11.500 1v22M18 1v22M1 5h22M1 11.500h22M1 18h22" stroke="#5e5e5e" stroke-width="3.400"/><path d="M5 1v22M11.500 1v22M18 1v22M1 5h22M1 11.500h22M1 18h22" stroke="#fafafa" stroke-width="1.500"/></svg>
<svg style="left:1519.5px;top:147px;" width="5" height="18" viewBox="0 0 5 18"><rect x="0" y="0" width="1" height="1" fill="#b4b4b4"/><rect x="0" y="3" width="1" height="1" fill="#b4b4b4"/><rect x="0" y="6" width="1" height="1" fill="#b4b4b4"/><rect x="0" y="9" width="1" height="1" fill="#b4b4b4"/><rect x="0" y="12" width="1" height="1" fill="#b4b4b4"/><rect x="0" y="15" width="1" height="1" fill="#b4b4b4"/><rect x="3" y="0" width="1" height="1" fill="#b4b4b4"/><rect x="3" y="3" width="1" height="1" fill="#b4b4b4"/><rect x="3" y="6" width="1" height="1" fill="#b4b4b4"/><rect x="3" y="9" width="1" height="1" fill="#b4b4b4"/><rect x="3" y="12" width="1" height="1" fill="#b4b4b4"/><rect x="3" y="15" width="1" height="1" fill="#b4b4b4"/></svg>
<svg style="left:1531.5px;top:143.0px" width="24" height="24" viewBox="0 0 24 24"><text x="2.500" y="20.500" font-family="Liberation Serif" font-style="italic" font-weight="bold" font-size="27" textLength="20" lengthAdjust="spacingAndGlyphs" fill="#f3d512" stroke="#6b5a00" stroke-width=".7">A</text></svg>
<svg style="left:1565.0px;top:143.0px" width="24" height="24" viewBox="0 0 24 24"><path d="M5 12h14" stroke="#333" stroke-width="1.200"/><path d="M5 12.500v8M19 12.500v8" fill="none" stroke="#3c3c3c" stroke-width="2.800"/><path d="M5 12.500v8M19 12.500v8" fill="none" stroke="#e8e8e8" stroke-width="1.200"/><rect x="3.500" y="10.500" width="3" height="3" fill="#222"/><rect x="17.500" y="10.500" width="3" height="3" fill="#222"/><circle cx="12" cy="12" r="2.3" fill="#f3d512" stroke="#6b5a00" stroke-width=".9"/><circle cx="5" cy="21" r="2.5" fill="#f3d512" stroke="#6b5a00" stroke-width=".9"/><circle cx="19" cy="21" r="2.5" fill="#f3d512" stroke="#6b5a00" stroke-width=".9"/><text x="4.500" y="8" font-family="Liberation Sans" font-weight="bold" font-size="7.500" fill="#888" stroke="#555" stroke-width=".3">1.00</text></svg>
<svg style="left:1598.0px;top:143.0px" width="24" height="24" viewBox="0 0 24 24"><path d="M1.500 4.500h11.500l5 4.500-5 4.500h-11.500z" fill="#e8e6d8" stroke="#333" stroke-width="1.300"/><path d="M4 7.500h7M4 10.500h7" stroke="#333" stroke-width="1.300"/><circle cx="14" cy="9" r=".9" fill="#333"/><path d="M17 10.500q3 1 3 5v3" fill="none" stroke="#3c3c3c" stroke-width="2.800"/><path d="M17 10.500q3 1 3 5v3" fill="none" stroke="#e8e8e8" stroke-width="1.200"/><circle cx="20" cy="20.5" r="2.7" fill="#f3d512" stroke="#6b5a00" stroke-width=".9"/></svg>
<svg style="left:1631.0px;top:143.0px" width="24" height="24" viewBox="0 0 24 24"><text x="0" y="21" font-family="Liberation Serif" font-style="italic" font-weight="bold" font-size="26" fill="#f3d512" stroke="#6b5a00" stroke-width=".7">A</text><path d="M10 17l2-5 8.500-9 3 3-8.500 9z" fill="#d8c020" stroke="#6b5a00" stroke-width=".8"/><path d="M14 9.500l3 3M16 7.500l3 3M18 5.500l3 3" stroke="#6b5a00" stroke-width=".6"/><path d="M10 17l2-5 3 3z" fill="#f4f0e0" stroke="#333" stroke-width=".6"/><path d="M10 17l.8-2 1.200 1.200z" fill="#222"/></svg>
<span class="t" id="t17" style="left:5.5px;top:177.60px;font-size:13px;line-height:13px;color:#000;letter-spacing:0.003px;">Combo View</span>
<svg style="left:504px;top:179px;" width="11" height="11" viewBox="0 0 11 11"><rect x=".5" y=".5" width="10" height="10" rx="2" fill="none" stroke="#6e6a66"/><rect x="4.500" y="2.500" width="4" height="4" rx=".8" fill="none" stroke="#6e6a66"/><rect x="2.500" y="4.500" width="4" height="4" rx=".8" fill="#efefef" stroke="#6e6a66"/></svg>
<svg style="left:518px;top:179px;" width="11" height="11" viewBox="0 0 11 11"><rect x=".5" y=".5" width="10" height="10" rx="2" fill="none" stroke="#6e6a66"/><path d="M3 3l5 5M8 3l-5 5" stroke="#5e5a56" stroke-width="2.200"/></svg>
<div style="left:1px;top:219px;width:530px;height:628px;background:#fbfbfb;border:1px solid #b4b4b4;"></div>
<div style="left:61px;top:196px;width:59px;height:23px;background:linear-gradient(#e9e9e9,#e2e2e2);border:1px solid #b9b9b9;border-bottom:none;border-radius:3px 3px 0 0;"></div>
<div style="left:1px;top:194px;width:61px;height:27px;background:linear-gradient(#ffffff,#fbfbfb);border:1px solid #b4b4b4;border-bottom:none;border-radius:3px 3px 0 0;"></div>
<span class="t" id="t18" style="left:13.5px;top:201.00px;font-size:13px;line-height:13px;color:#000;letter-spacing:0.020px;">Model</span>
<span class="t" id="t19" style="left:73px;top:202.00px;font-size:13px;line-height:13px;color:#000;letter-spacing:0.316px;">Tasks</span>
<div style="left:3px;top:221px;width:526px;height:395px;background:#fff;border:1px solid #b4b4b4;"></div>
<div style="left:4px;top:222px;width:510px;height:19px;background:#efefef;"></div>
<div style="left:4px;top:222px;width:264px;height:19px;background:linear-gradient(#ffffff,#ebebeb);border-right:1px solid #c6c6c6;border-bottom:1px solid #c0c0c0;"></div>
<div style="left:268px;top:222px;width:100px;height:19px;background:linear-gradient(#ffffff,#ebebeb);border-bottom:1px solid #c0c0c0;"></div>
<span class="t" id="t20" style="left:6px;top:225.00px;font-size:13px;line-height:13px;color:#000;letter-spacing:0.311px;">Labels &amp; Attributes</span>
<span class="t" id="t21" style="left:270.4px;top:225.00px;font-size:13px;line-height:13px;color:#000;letter-spacing:0.197px;">Description</span>
<div style="left:514px;top:222px;width:14px;height:393px;background:#e4e4e4;border-left:1px solid #c0c0c0;"></div>
<div style="left:514px;top:222px;width:14px;height:14px;background:linear-gradient(90deg,#fdfdfd,#f1f1f1);border-left:1px solid #c0c0c0;border-bottom:1px solid #c4c4c4;"></div>
<div style="left:514px;top:601px;width:14px;height:14px;background:linear-gradient(90deg,#fdfdfd,#f1f1f1);border-left:1px solid #c0c0c0;border-top:1px solid #c4c4c4;"></div>
<div style="left:514px;top:365px;width:14px;height:237px;background:linear-gradient(90deg,#ffffff,#f0f0f0);border-left:1px solid #c0c0c0;border-top:1px solid #c4c4c4;border-bottom:1px solid #c4c4c4;"></div>
<svg style="left:517.0px;top:226.0px;" width="8" height="5" viewBox="0 0 8 5"><path d="M0 4.500l4-4.500 4 4.500z" fill="#4b4b4b"/></svg>
<svg style="left:517.0px;top:606.0px;" width="8" height="5" viewBox="0 0 8 5"><path d="M0 0h8l-4 4.500z" fill="#4b4b4b"/></svg>
<div style="left:4px;top:583px;width:364px;height:18px;background:#308cc6;"></div>
<span class="t" id="t22" style="left:89px;top:243.80px;font-size:13px;line-height:13px;color:#000;letter-spacing:0.002px;">ArchSketch__Master</span>
<svg style="left:67px;top:242px;" width="16" height="16" viewBox="0 0 16 16"><rect x="1.300" y="6.300" width="8.500" height="8.300" rx="1" fill="none" stroke="#cc1414" stroke-width="1.700"/><circle cx="10.200" cy="5.300" r="4.300" fill="none" stroke="#cc1414" stroke-width="1.700"/></svg>
<span class="t" id="t23" style="left:89px;top:261.80px;font-size:13px;line-height:13px;color:#000;letter-spacing:-0.129px;">Window_1</span>
<svg style="left:67px;top:260px;" width="16" height="16" viewBox="0 0 16 16"><path d="M.3 1l15.500 2.700v12l-15.500-3.700z" fill="#8b918f"/><path d="M14 3.400l1.800 .3v12l-1.800-.4z" fill="#b9bdbb"/><path d="M2 3.200l4.800 .8v3.400l-4.800-.8zM8.300 4.300l4.600 .8v3.600l-4.600-.9zM2 8.300l4.800 .9v3.300l-4.800-1.100zM8.300 9.500l4.600 .9v3.500l-4.600-1.100z" fill="#aeb3b1"/><path d="M3.800 5.200l3 .6v1.600zM10.300 6.500l2.600 .6v1.600zM3.800 10.200l3 .7v1.600zM10.300 11.700l2.600 .7v1.500z" fill="#ffffff"/><path d="M2.600 3.900l3 .5M8.900 5l3 .5" stroke="#e4e6e5" stroke-width=".8"/></svg>
<svg style="left:52px;top:264px;" width="5" height="8" viewBox="0 0 5 8"><path d="M0 0l4.500 4-4.500 4z" fill="#4b4b4b"/></svg>
<span class="t" id="t24" style="left:89px;top:279.80px;font-size:13px;line-height:13px;color:#000;letter-spacing:-0.118px;">Link_01_Window_1</span>
<svg style="left:67px;top:278px;" width="16" height="16" viewBox="0 0 16 16"><path d="M.3 1l15.500 2.700v12l-15.500-3.700z" fill="#8b918f"/><path d="M14 3.400l1.800 .3v12l-1.800-.4z" fill="#b9bdbb"/><path d="M2 3.200l4.800 .8v3.400l-4.800-.8zM8.300 4.300l4.600 .8v3.600l-4.600-.9zM2 8.300l4.800 .9v3.300l-4.800-1.100zM8.300 9.500l4.600 .9v3.500l-4.600-1.100z" fill="#aeb3b1"/><path d="M3.800 5.200l3 .6v1.600zM10.300 6.500l2.600 .6v1.600zM3.800 10.200l3 .7v1.600zM10.300 11.700l2.600 .7v1.500z" fill="#ffffff"/><path d="M2.600 3.900l3 .5M8.900 5l3 .5" stroke="#e4e6e5" stroke-width=".8"/><rect x=".3" y="10.300" width="5.700" height="5.400" fill="#fff" stroke="#000" stroke-width="1.100"/><path d="M1.600 14.600l2.800-2.800M2.400 11.700h2.100v2.100" stroke="#000" stroke-width="1" fill="none"/></svg>
<svg style="left:52px;top:282px;" width="5" height="8" viewBox="0 0 5 8"><path d="M0 0l4.500 4-4.500 4z" fill="#4b4b4b"/></svg>
<span class="t" id="t25" style="left:89px;top:297.80px;font-size:13px;line-height:13px;color:#000;letter-spacing:-0.118px;">Link_02_Window_1</span>
<svg style="left:67px;top:296px;" width="16" height="16" viewBox="0 0 16 16"><path d="M.3 1l15.500 2.700v12l-15.500-3.700z" fill="#8b918f"/><path d="M14 3.400l1.800 .3v12l-1.800-.4z" fill="#b9bdbb"/><path d="M2 3.200l4.800 .8v3.400l-4.800-.8zM8.300 4.300l4.600 .8v3.600l-4.600-.9zM2 8.300l4.800 .9v3.300l-4.800-1.100zM8.300 9.500l4.600 .9v3.500l-4.600-1.100z" fill="#aeb3b1"/><path d="M3.800 5.200l3 .6v1.600zM10.300 6.500l2.600 .6v1.600zM3.800 10.200l3 .7v1.600zM10.300 11.700l2.600 .7v1.500z" fill="#ffffff"/><path d="M2.600 3.900l3 .5M8.900 5l3 .5" stroke="#e4e6e5" stroke-width=".8"/><rect x=".3" y="10.300" width="5.700" height="5.400" fill="#fff" stroke="#000" stroke-width="1.100"/><path d="M1.600 14.600l2.800-2.800M2.400 11.700h2.100v2.100" stroke="#000" stroke-width="1" fill="none"/></svg>
<svg style="left:52px;top:300px;" width="5" height="8" viewBox="0 0 5 8"><path d="M0 0l4.500 4-4.500 4z" fill="#4b4b4b"/></svg>
<span class="t" id="t26" style="left:89px;top:315.80px;font-size:13px;line-height:13px;color:#000;letter-spacing:-0.118px;">Link_03_Window_1</span>
<svg style="left:67px;top:314px;" width="16" height="16" viewBox="0 0 16 16"><path d="M.3 1l15.500 2.700v12l-15.500-3.700z" fill="#8b918f"/><path d="M14 3.400l1.800 .3v12l-1.800-.4z" fill="#b9bdbb"/><path d="M2 3.200l4.800 .8v3.400l-4.800-.8zM8.300 4.300l4.600 .8v3.600l-4.600-.9zM2 8.300l4.800 .9v3.300l-4.800-1.100zM8.300 9.500l4.600 .9v3.500l-4.600-1.100z" fill="#aeb3b1"/><path d="M3.800 5.200l3 .6v1.600zM10.300 6.500l2.600 .6v1.600zM3.800 10.200l3 .7v1.600zM10.300 11.700l2.600 .7v1.500z" fill="#ffffff"/><path d="M2.600 3.900l3 .5M8.900 5l3 .5" stroke="#e4e6e5" stroke-width=".8"/><rect x=".3" y="10.300" width="5.700" height="5.400" fill="#fff" stroke="#000" stroke-width="1.100"/><path d="M1.600 14.600l2.800-2.800M2.400 11.700h2.100v2.100" stroke="#000" stroke-width="1" fill="none"/></svg>
<svg style="left:52px;top:318px;" width="5" height="8" viewBox="0 0 5 8"><path d="M0 0l4.500 4-4.500 4z" fill="#4b4b4b"/></svg>
<span class="t" id="t27" style="left:69px;top:333.80px;font-size:13px;line-height:13px;color:#bebebe;letter-spacing:0.073px;">ArchSketch__Dependent</span>
<svg style="left:47px;top:332px;" width="16" height="16" viewBox="0 0 16 16"><rect x="1.300" y="6.300" width="8.500" height="8.300" rx="1" fill="none" stroke="#ababab" stroke-width="1.700"/><circle cx="10.200" cy="5.300" r="4.300" fill="none" stroke="#ababab" stroke-width="1.700"/></svg>
<span class="t" id="t28" style="left:69px;top:351.80px;font-size:13px;line-height:13px;color:#bebebe;letter-spacing:0.017px;">Lnk_01_ArchSketch__Dependent</span>
<svg style="left:47px;top:350px;" width="16" height="16" viewBox="0 0 16 16"><rect x="1.300" y="6.300" width="8.500" height="8.300" rx="1" fill="none" stroke="#ababab" stroke-width="1.700"/><circle cx="10.200" cy="5.300" r="4.300" fill="none" stroke="#ababab" stroke-width="1.700"/><rect x=".3" y="10.300" width="5.700" height="5.400" fill="#fff" stroke="#000" stroke-width="1.100"/><path d="M1.600 14.600l2.800-2.800M2.400 11.700h2.100v2.100" stroke="#000" stroke-width="1" fill="none"/></svg>
<span class="t" id="t29" style="left:69px;top:369.80px;font-size:13px;line-height:13px;color:#bebebe;letter-spacing:0.017px;">Lnk_02_ArchSketch__Dependent</span>
<svg style="left:47px;top:368px;" width="16" height="16" viewBox="0 0 16 16"><rect x="1.300" y="6.300" width="8.500" height="8.300" rx="1" fill="none" stroke="#ababab" stroke-width="1.700"/><circle cx="10.200" cy="5.300" r="4.300" fill="none" stroke="#ababab" stroke-width="1.700"/><rect x=".3" y="10.300" width="5.700" height="5.400" fill="#fff" stroke="#000" stroke-width="1.100"/><path d="M1.600 14.600l2.800-2.800M2.400 11.700h2.100v2.100" stroke="#000" stroke-width="1" fill="none"/></svg>
<span class="t" id="t30" style="left:69px;top:387.80px;font-size:13px;line-height:13px;color:#bebebe;letter-spacing:0.109px;">wc</span>
<svg style="left:47px;top:386px;" width="16" height="16" viewBox="0 0 16 16"><path d="M1 5l3-3.500 3 2.500 3-2.500 3 2 2 2v8.500l-2-1.500-3 2.500-3-2.500-3 2.500-3-2z" fill="#b4b4b4" stroke="#9a9a9a" stroke-width=".7"/><path d="M4 1.500v11.500M7 4v11M10 1.500v11M13 3.500v10.500" stroke="#8e8e8e" stroke-width=".8"/><path d="M4 1.500l3 2.500v11l-3-2zM10 1.500l3 2v10.500l-3-2z" fill="#9c9c9c"/></svg>
<span class="t" id="t31" style="left:69px;top:405.80px;font-size:13px;line-height:13px;color:#000;letter-spacing:-0.625px;">Eqpt__WC</span>
<svg style="left:47px;top:404px;" width="16" height="16" viewBox="0 0 16 16"><path d="M2.300 4l4.500-3.400 2.400 1.300v5.300l3-1.400 2.200 1.200v7l-2.600 1.500-1.400-.8v-3.200l-1.600 .9v4l-2.600 1.400-1.400-.8v-4l-1.500 .8v3l-2 .9z" fill="#8e9492" stroke="#6a706e" stroke-width=".6"/><path d="M3.400 5.200v10M8.100 9v6.500M12.300 7.800v6.500" stroke="#f2f4f2" stroke-width="1.300"/><path d="M3.400 9.800l4.700-1.800" stroke="#f2f4f2" stroke-width="1.200"/><path d="M5.500 3v5M10.200 11v4" stroke="#6a8a8a" stroke-width=".9"/></svg>
<svg style="left:30px;top:410px;" width="8" height="5" viewBox="0 0 8 5"><path d="M0 0h8l-4 4.500z" fill="#4b4b4b"/></svg>
<span class="t" id="t32" style="left:89px;top:423.80px;font-size:13px;line-height:13px;color:#bebebe;letter-spacing:0.136px;">Part__Toilet-VillaSavoye-00</span>
<svg style="left:67px;top:422px;" width="16" height="16" viewBox="0 0 16 16"><path d="M1 4.500l8-3 6.500 2v9l-7 3.500-7.500-3z" fill="#9a9a9a" stroke="#7a7a7a" stroke-width=".7"/><path d="M1 4.500l7.500 2.500 7-3.500-6.500-2z" fill="#c4c4c4"/><path d="M8.500 7v9l7-3.500v-9z" fill="#868686"/></svg>
<span class="t" id="t33" style="left:69px;top:441.80px;font-size:13px;line-height:13px;color:#000;letter-spacing:-0.293px;">Eqpt__Bed</span>
<svg style="left:47px;top:440px;" width="16" height="16" viewBox="0 0 16 16"><path d="M2.300 4l4.500-3.400 2.400 1.300v5.300l3-1.400 2.200 1.200v7l-2.600 1.500-1.400-.8v-3.200l-1.600 .9v4l-2.600 1.400-1.400-.8v-4l-1.500 .8v3l-2 .9z" fill="#8e9492" stroke="#6a706e" stroke-width=".6"/><path d="M3.400 5.200v10M8.100 9v6.500M12.300 7.800v6.500" stroke="#f2f4f2" stroke-width="1.300"/><path d="M3.400 9.800l4.700-1.800" stroke="#f2f4f2" stroke-width="1.200"/><path d="M5.500 3v5M10.200 11v4" stroke="#6a8a8a" stroke-width=".9"/></svg>
<svg style="left:30px;top:446px;" width="8" height="5" viewBox="0 0 8 5"><path d="M0 0h8l-4 4.500z" fill="#4b4b4b"/></svg>
<span class="t" id="t34" style="left:89px;top:459.80px;font-size:13px;line-height:13px;color:#bebebe;letter-spacing:-0.300px;">Part__Bed-1</span>
<svg style="left:67px;top:458px;" width="16" height="16" viewBox="0 0 16 16"><path d="M1 4.500l8-3 6.500 2v9l-7 3.500-7.500-3z" fill="#9a9a9a" stroke="#7a7a7a" stroke-width=".7"/><path d="M1 4.500l7.500 2.500 7-3.500-6.500-2z" fill="#c4c4c4"/><path d="M8.500 7v9l7-3.500v-9z" fill="#868686"/></svg>
<span class="t" id="t35" style="left:69px;top:477.80px;font-size:13px;line-height:13px;color:#bebebe;letter-spacing:-0.448px;">Array__WC</span>
<svg style="left:47px;top:476px;" width="16" height="16" viewBox="0 0 16 16"><rect x="1" y="2" width="3" height="13" fill="#9a9a9a" stroke="#7a7a7a" stroke-width=".6"/><rect x="5.500" y="2" width="3" height="13" fill="#9a9a9a" stroke="#7a7a7a" stroke-width=".6"/><rect x="10" y="4" width="2.200" height="11" fill="#9a9a9a" stroke="#7a7a7a" stroke-width=".6"/><rect x="13" y="4" width="2.200" height="11" fill="#9a9a9a" stroke="#7a7a7a" stroke-width=".6"/><path d="M9.500 3.500l2.200-2.500 2.200 2.500M12.800 3.500l1.500-2" stroke="#8a8a8a" stroke-width=".9" fill="none"/></svg>
<svg style="left:30px;top:482px;" width="8" height="5" viewBox="0 0 8 5"><path d="M0 0h8l-4 4.500z" fill="#4b4b4b"/></svg>
<span class="t" id="t36" style="left:89px;top:495.80px;font-size:13px;line-height:13px;color:#bebebe;letter-spacing:0.136px;">Part__Toilet-VillaSavoye-00</span>
<svg style="left:67px;top:494px;" width="16" height="16" viewBox="0 0 16 16"><path d="M1 4.500l8-3 6.500 2v9l-7 3.500-7.500-3z" fill="#9a9a9a" stroke="#7a7a7a" stroke-width=".7"/><path d="M1 4.500l7.500 2.500 7-3.500-6.500-2z" fill="#c4c4c4"/><path d="M8.500 7v9l7-3.500v-9z" fill="#868686"/></svg>
<span class="t" id="t37" style="left:69px;top:513.80px;font-size:13px;line-height:13px;color:#000;letter-spacing:-0.296px;">Eqpt__WC001</span>
<svg style="left:47px;top:512px;" width="16" height="16" viewBox="0 0 16 16"><path d="M2.300 4l4.500-3.400 2.400 1.300v5.300l3-1.400 2.200 1.200v7l-2.600 1.500-1.400-.8v-3.200l-1.600 .9v4l-2.600 1.400-1.400-.8v-4l-1.500 .8v3l-2 .9z" fill="#8e9492" stroke="#6a706e" stroke-width=".6"/><path d="M3.400 5.200v10M8.100 9v6.500M12.300 7.800v6.500" stroke="#f2f4f2" stroke-width="1.300"/><path d="M3.400 9.800l4.700-1.800" stroke="#f2f4f2" stroke-width="1.200"/><path d="M5.500 3v5M10.200 11v4" stroke="#6a8a8a" stroke-width=".9"/></svg>
<svg style="left:30px;top:518px;" width="8" height="5" viewBox="0 0 8 5"><path d="M0 0h8l-4 4.500z" fill="#4b4b4b"/></svg>
<span class="t" id="t38" style="left:89px;top:531.80px;font-size:13px;line-height:13px;color:#bebebe;letter-spacing:0.136px;">Part__Toilet-VillaSavoye-00</span>
<svg style="left:67px;top:530px;" width="16" height="16" viewBox="0 0 16 16"><path d="M1 4.500l8-3 6.500 2v9l-7 3.500-7.500-3z" fill="#9a9a9a" stroke="#7a7a7a" stroke-width=".7"/><path d="M1 4.500l7.500 2.500 7-3.500-6.500-2z" fill="#c4c4c4"/><path d="M8.500 7v9l7-3.500v-9z" fill="#868686"/></svg>
<span class="t" id="t39" style="left:69px;top:549.80px;font-size:13px;line-height:13px;color:#000;letter-spacing:-0.296px;">Eqpt__WC002</span>
<svg style="left:47px;top:548px;" width="16" height="16" viewBox="0 0 16 16"><path d="M2.300 4l4.500-3.400 2.400 1.300v5.300l3-1.400 2.200 1.200v7l-2.600 1.500-1.400-.8v-3.200l-1.600 .9v4l-2.600 1.400-1.400-.8v-4l-1.500 .8v3l-2 .9z" fill="#8e9492" stroke="#6a706e" stroke-width=".6"/><path d="M3.400 5.200v10M8.100 9v6.500M12.300 7.800v6.500" stroke="#f2f4f2" stroke-width="1.300"/><path d="M3.400 9.800l4.700-1.800" stroke="#f2f4f2" stroke-width="1.200"/><path d="M5.500 3v5M10.200 11v4" stroke="#6a8a8a" stroke-width=".9"/></svg>
<svg style="left:30px;top:554px;" width="8" height="5" viewBox="0 0 8 5"><path d="M0 0h8l-4 4.500z" fill="#4b4b4b"/></svg>
<span class="t" id="t40" style="left:89px;top:567.80px;font-size:13px;line-height:13px;color:#bebebe;letter-spacing:0.136px;">Part__Toilet-VillaSavoye-00</span>
<svg style="left:67px;top:566px;" width="16" height="16" viewBox="0 0 16 16"><path d="M1 4.500l8-3 6.500 2v9l-7 3.500-7.500-3z" fill="#9a9a9a" stroke="#7a7a7a" stroke-width=".7"/><path d="M1 4.500l7.500 2.500 7-3.500-6.500-2z" fill="#c4c4c4"/><path d="M8.500 7v9l7-3.500v-9z" fill="#868686"/></svg>
<span class="t" id="t41" style="left:69px;top:585.80px;font-size:13px;line-height:13px;color:#fff;letter-spacing:-0.139px;">Eqpt__Bed001</span>
<svg style="left:47px;top:584px;" width="16" height="16" viewBox="0 0 16 16"><path d="M2.300 4l4.500-3.400 2.400 1.300v5.300l3-1.400 2.200 1.200v7l-2.600 1.500-1.400-.8v-3.200l-1.600 .9v4l-2.600 1.400-1.400-.8v-4l-1.500 .8v3l-2 .9z" fill="#a9c0d2" stroke="#7a9ab0" stroke-width=".6"/><path d="M3.400 5.200v10M8.100 9v6.500M12.300 7.800v6.500" stroke="#f2f4f2" stroke-width="1.300"/><path d="M3.400 9.800l4.700-1.800" stroke="#f2f4f2" stroke-width="1.200"/><path d="M5.500 3v5M10.200 11v4" stroke="#6a8a8a" stroke-width=".9"/><rect x=".3" y="10.300" width="5.700" height="5.400" fill="#fff" stroke="#000" stroke-width="1.100"/><path d="M1.600 14.600l2.800-2.800M2.400 11.700h2.100v2.100" stroke="#000" stroke-width="1" fill="none"/></svg>
<svg style="left:32px;top:588px;" width="5" height="8" viewBox="0 0 5 8"><path d="M0 0l4.500 4-4.500 4z" fill="#4b4b4b"/></svg>
<svg style="left:534px;top:505px;" width="2" height="17" viewBox="0 0 2 17"><rect x="0" y="0" width="1" height="1" fill="#b0b0b0"/><rect x="0" y="3" width="1" height="1" fill="#b0b0b0"/><rect x="0" y="6" width="1" height="1" fill="#b0b0b0"/><rect x="0" y="9" width="1" height="1" fill="#b0b0b0"/><rect x="0" y="12" width="1" height="1" fill="#b0b0b0"/><rect x="0" y="15" width="1" height="1" fill="#b0b0b0"/></svg>
<svg style="left:259px;top:617px;" width="16" height="2" viewBox="0 0 16 2"><rect x="0.0" y="0" width="1" height="1" fill="#b0b0b0"/><rect x="2.5" y="0" width="1" height="1" fill="#b0b0b0"/><rect x="5.0" y="0" width="1" height="1" fill="#b0b0b0"/><rect x="7.5" y="0" width="1" height="1" fill="#b0b0b0"/><rect x="10.0" y="0" width="1" height="1" fill="#b0b0b0"/><rect x="12.5" y="0" width="1" height="1" fill="#b0b0b0"/></svg>
<div style="left:3px;top:620px;width:526px;height:201px;background:#fbfbfb;border:1px solid #b4b4b4;"></div>
<div style="left:5px;top:622px;width:522px;height:197px;background:#fff;border:1px solid #b4b4b4;"></div>
<div style="left:6px;top:623px;width:506px;height:19px;background:linear-gradient(#ffffff,#ebebeb);border-bottom:1px solid #c0c0c0;"></div>
<div style="left:225px;top:623px;width:1px;height:19px;background:#c6c6c6;"></div>
<span class="t" id="t42" style="left:8px;top:625.80px;font-size:13px;line-height:13px;color:#000;letter-spacing:0.223px;">Property</span>
<span class="t" id="t43" style="left:228px;top:625.80px;font-size:13px;line-height:13px;color:#000;letter-spacing:0.326px;">Value</span>
<div style="left:512px;top:623px;width:14px;height:195px;background:#e4e4e4;border-left:1px solid #c0c0c0;"></div>
<div style="left:512px;top:623px;width:14px;height:14px;background:linear-gradient(90deg,#fdfdfd,#f1f1f1);border-left:1px solid #c0c0c0;border-bottom:1px solid #c4c4c4;"></div>
<div style="left:512px;top:804px;width:14px;height:14px;background:linear-gradient(90deg,#fdfdfd,#f1f1f1);border-left:1px solid #c0c0c0;border-top:1px solid #c4c4c4;"></div>
<div style="left:512px;top:777px;width:14px;height:28px;background:linear-gradient(90deg,#ffffff,#f0f0f0);border-left:1px solid #c0c0c0;border-top:1px solid #c4c4c4;border-bottom:1px solid #c4c4c4;"></div>
<svg style="left:515.0px;top:627.0px;" width="8" height="5" viewBox="0 0 8 5"><path d="M0 4.500l4-4.500 4 4.500z" fill="#4b4b4b"/></svg>
<svg style="left:515.0px;top:809.0px;" width="8" height="5" viewBox="0 0 8 5"><path d="M0 0h8l-4 4.500z" fill="#4b4b4b"/></svg>
<div style="left:6px;top:642px;width:506px;height:15px;background:#f7f7f7;"></div>
<div style="left:66px;top:657px;width:446px;height:1px;background:#c4c4c4;"></div>
<div style="left:225px;top:642px;width:1px;height:16px;background:#c4c4c4;"></div>
<span class="t" id="t44" style="left:69px;top:641.80px;font-size:13px;line-height:13px;color:#000;">x</span>
<span class="t" id="t45" style="left:229px;top:641.80px;font-size:13px;line-height:13px;color:#000;letter-spacing:0.454px;">0.00 mm</span>
<div style="left:66px;top:677px;width:446px;height:1px;background:#c4c4c4;"></div>
<div style="left:225px;top:658px;width:1px;height:20px;background:#c4c4c4;"></div>
<span class="t" id="t46" style="left:69px;top:661.80px;font-size:13px;line-height:13px;color:#000;">y</span>
<span class="t" id="t47" style="left:229px;top:661.80px;font-size:13px;line-height:13px;color:#000;letter-spacing:0.454px;">0.00 mm</span>
<div style="left:6px;top:678px;width:506px;height:19px;background:#f7f7f7;"></div>
<div style="left:66px;top:697px;width:446px;height:1px;background:#c4c4c4;"></div>
<div style="left:225px;top:678px;width:1px;height:20px;background:#c4c4c4;"></div>
<span class="t" id="t48" style="left:69px;top:681.80px;font-size:13px;line-height:13px;color:#000;">z</span>
<span class="t" id="t49" style="left:229px;top:681.80px;font-size:13px;line-height:13px;color:#000;letter-spacing:0.454px;">0.00 mm</span>
<div style="left:26px;top:717px;width:486px;height:1px;background:#c4c4c4;"></div>
<div style="left:225px;top:698px;width:1px;height:20px;background:#c4c4c4;"></div>
<span class="t" id="t50" style="left:29px;top:701.80px;font-size:13px;line-height:13px;color:#000;letter-spacing:0.193px;">Flip180 Degree</span>
<span class="t" id="t51" style="left:229px;top:701.80px;font-size:13px;line-height:13px;color:#000;letter-spacing:0.133px;">false</span>
<div style="left:6px;top:718px;width:506px;height:19px;background:#f7f7f7;"></div>
<div style="left:26px;top:737px;width:486px;height:1px;background:#c4c4c4;"></div>
<div style="left:225px;top:718px;width:1px;height:20px;background:#c4c4c4;"></div>
<span class="t" id="t52" style="left:29px;top:721.80px;font-size:13px;line-height:13px;color:#000;letter-spacing:0.208px;">Flip Offset Origin To Other End</span>
<span class="t" id="t53" style="left:229px;top:721.80px;font-size:13px;line-height:13px;color:#000;letter-spacing:0.133px;">false</span>
<div style="left:26px;top:757px;width:486px;height:1px;background:#c4c4c4;"></div>
<div style="left:225px;top:738px;width:1px;height:20px;background:#c4c4c4;"></div>
<span class="t" id="t54" style="left:29px;top:741.80px;font-size:13px;line-height:13px;color:#000;letter-spacing:0.159px;">Master Sketch</span>
<span class="t" id="t55" style="left:229px;top:741.80px;font-size:13px;line-height:13px;color:#000;letter-spacing:0.118px;">ArchSketch004 (ArchSketch__Master)</span>
<div style="left:6px;top:758px;width:506px;height:19px;background:#f7f7f7;"></div>
<div style="left:26px;top:777px;width:486px;height:1px;background:#c4c4c4;"></div>
<div style="left:225px;top:758px;width:1px;height:20px;background:#c4c4c4;"></div>
<span class="t" id="t56" style="left:29px;top:761.80px;font-size:13px;line-height:13px;color:#000;letter-spacing:0.218px;">Master Sketch Intersecting Su...</span>
<div style="left:6px;top:778px;width:219px;height:19px;background:#308cc6;"></div>
<div style="left:26px;top:797px;width:486px;height:1px;background:#c4c4c4;"></div>
<div style="left:225px;top:778px;width:1px;height:20px;background:#c4c4c4;"></div>
<span class="t" id="t57" style="left:29px;top:781.80px;font-size:13px;line-height:13px;color:#fff;letter-spacing:0.214px;">Master Sketch Subelement</span>
<span class="t" id="t58" style="left:229px;top:781.80px;font-size:13px;line-height:13px;color:#000;">6</span>
<div style="left:6px;top:798px;width:506px;height:19px;background:#f7f7f7;"></div>
<div style="left:6px;top:798px;width:219px;height:19px;background:#308cc6;"></div>
<div style="left:26px;top:817px;width:486px;height:1px;background:#c4c4c4;"></div>
<div style="left:225px;top:798px;width:1px;height:20px;background:#c4c4c4;"></div>
<span class="t" id="t59" style="left:29px;top:801.80px;font-size:13px;line-height:13px;color:#fff;letter-spacing:0.219px;">Master Sketch Subelement Of...</span>
<span class="t" id="t60" style="left:229px;top:801.80px;font-size:13px;line-height:13px;color:#000;letter-spacing:0.415px;">4000.00 mm</span>
<div style="left:3px;top:820px;width:54px;height:23px;background:linear-gradient(#e4e4e4,#eaeaea);border:1px solid #b9b9b9;border-top:none;border-radius:0 0 3px 3px;"></div>
<div style="left:56px;top:819px;width:53px;height:26px;background:#fdfdfd;border:1px solid #b4b4b4;border-top:none;border-radius:0 0 3px 3px;"></div>
<span class="t" id="t61" style="left:15px;top:825.00px;font-size:13px;line-height:13px;color:#000;letter-spacing:0.182px;">View</span>
<span class="t" id="t62" style="left:68.5px;top:826.00px;font-size:13px;line-height:13px;color:#000;letter-spacing:0.010px;">Data</span>
<svg style="left:537px;top:175px;overflow:hidden" width="1144" height="641" viewBox="537 175 1144 641"><rect x="537" y="175" width="1144" height="641" fill="#808080"/><path d="M772.9 356.1L1398 240.5L1449.5 729.7L646.8 677.4Z" fill="none" stroke="#141414" stroke-width="10.8" stroke-linejoin="miter" stroke-miterlimit="10"/><path d="M1181.7 280.7L1127.9 708.4" fill="none" stroke="#141414" stroke-width="10.8"/><path d="M772.9 356.1L1398 240.5L1449.5 729.7L646.8 677.4Z" fill="none" stroke="#a9a9a9" stroke-width="8.6" stroke-linejoin="miter" stroke-miterlimit="10"/><path d="M1181.7 280.7L1127.9 708.4" fill="none" stroke="#a9a9a9" stroke-width="8.6"/><path d="M772.9 356.1L1398 240.5L1449.5 729.7L646.8 677.4ZM1181.7 280.7L1127.9 708.4" fill="none" stroke="#f2f2f2" stroke-width="1.200"/><rect x="771.1" y="354.3" width="3.600" height="3.600" fill="#ffffff"/><rect x="1396.2" y="238.7" width="3.600" height="3.600" fill="#ffffff"/><rect x="1447.7" y="727.9" width="3.600" height="3.600" fill="#ffffff"/><rect x="645.0" y="675.6" width="3.600" height="3.600" fill="#ffffff"/><rect x="1179.9" y="278.9" width="3.600" height="3.600" fill="#ffffff"/><rect x="1126.1" y="706.6" width="3.600" height="3.600" fill="#ffffff"/><polygon points="1318.0,250.0 1370.2,240.5 1372.4,251.5 1319.4,261.3" fill="#e2e2e2" stroke="#1a1a1a" stroke-width="1"/><path d="M1317.700 248.800l2 13.600M1369.900 239.200l2.800 13.600" stroke="#1a1a1a" stroke-width="1"/><polygon points="673.2,673.4 727.3,676.7 726.6,687.7 673.2,684.4" fill="#e2e2e2" stroke="#1a1a1a" stroke-width="1"/><path d="M673.200 672.200v13.600M727.400 675.400l-.9 13.600" stroke="#1a1a1a" stroke-width="1"/><polygon points="936.3,621.0 991.3,619.5 992.4,673.7 938.2,675.2" fill="#dcdcdc" stroke="#161616" stroke-width="1.200"/><polygon points="942.2,626.5 985.8,625.0 986.9,668.2 943.3,669.7" fill="#7a9399" stroke="#161616" stroke-width="1.200"/><polygon points="1392.8,654.3 1445.6,649.2 1451.7,702.0 1398.4,708.1" fill="#dcdcdc" stroke="#161616" stroke-width="1.100"/><polygon points="1399.0,659.5 1442.0,654.9 1446.6,696.9 1403.6,702.0" fill="#7a9399" stroke="#161616" stroke-width="1.100"/><polygon points="1437.2,655.4 1442.0,654.9 1446.6,696.9 1441.4,697.5" fill="#a9cdd6"/><path d="M1435.300 640l8.200 84" stroke="#161616" stroke-width="1" fill="none"/><g transform="translate(0,0)" fill="none" stroke="#161616" stroke-width="1"><path d="M1058.500 348.700L1161.100 361.300L1155.300 409.500L1052 396.200Q1048.800 395.600 1049.200 392.500L1054 351.500Q1054.600 348.300 1058.500 348.700Z"/><path d="M1131.700 358.200Q1141 385 1138.400 407.300"/><path d="M1121.900 364Q1135 382 1138 402"/><path d="M1121.900 364Q1129 364.500 1131.700 358.200"/><path d="M1147.600 371.900L1154.200 372.700Q1157 373.200 1156.600 376L1154.200 394Q1153.700 396.800 1150.900 396.400L1144.600 395.400Q1141.800 394.800 1142.300 392L1144.800 374.200Q1145.300 371.500 1147.600 371.900Z"/></g><g transform="translate(-13,106.6)" fill="none" stroke="#f2f22e" stroke-width="1.1"><path d="M1058.500 348.700L1161.100 361.300L1155.300 409.500L1052 396.200Q1048.800 395.600 1049.200 392.500L1054 351.500Q1054.600 348.300 1058.500 348.700Z"/><path d="M1131.700 358.200Q1141 385 1138.400 407.300"/><path d="M1121.900 364Q1135 382 1138 402"/><path d="M1121.900 364Q1129 364.500 1131.700 358.200"/><path d="M1147.600 371.900L1154.200 372.700Q1157 373.200 1156.600 376L1154.200 394Q1153.700 396.800 1150.900 396.400L1144.600 395.400Q1141.800 394.800 1142.300 392L1144.800 374.200Q1145.300 371.500 1147.600 371.900Z"/></g><rect x="1042.1" y="452.7" width="4" height="4" fill="#f4f430"/><rect x="1039.0" y="455.2" width="4" height="4" fill="#f4f430"/><rect x="1146.0" y="466.1" width="4" height="4" fill="#f4f430"/><rect x="1140.2" y="513.8" width="4" height="4" fill="#f4f430"/><rect x="1036.3" y="500.9" width="4" height="4" fill="#f4f430"/><rect x="1033.9" y="497.6" width="4" height="4" fill="#f4f430"/><rect x="1116.6" y="462.1" width="4" height="4" fill="#f4f430"/><rect x="1106.8" y="467.9" width="4" height="4" fill="#f4f430"/><rect x="1122.8" y="511.6" width="4" height="4" fill="#f4f430"/><rect x="1131.7" y="475.9" width="4" height="4" fill="#f4f430"/><rect x="1128.6" y="478.1" width="4" height="4" fill="#f4f430"/><rect x="1139.8" y="476.8" width="4" height="4" fill="#f4f430"/><rect x="1142.4" y="479.5" width="4" height="4" fill="#f4f430"/><rect x="1126.4" y="496.9" width="4" height="4" fill="#f4f430"/><rect x="1128.6" y="500.0" width="4" height="4" fill="#f4f430"/><rect x="1136.6" y="500.9" width="4" height="4" fill="#f4f430"/><rect x="1139.8" y="497.8" width="4" height="4" fill="#f4f430"/><path d="M1384.2 455.3C1376.6 455.3 1372.9 460.1 1372.9 466.2C1372.9 473.0 1378.2 478.6 1385.0 478.6C1388.0 478.6 1390.3 477.5 1392.5 476.5C1396.3 474.5 1400.1 473.7 1403.9 472.5C1408.4 471.0 1410.7 468.4 1410.7 464.7C1410.7 460.1 1406.9 458.3 1403.1 457.9C1398.6 457.4 1395.6 457.4 1392.5 456.5C1389.5 455.6 1387.2 455.3 1384.2 455.3Z" transform="translate(0,0)" fill="none" stroke="#161616" stroke-width="1"/><path d="M1384.2 455.3C1376.6 455.3 1372.9 460.1 1372.9 466.2C1372.9 473.0 1378.2 478.6 1385.0 478.6C1388.0 478.6 1390.3 477.5 1392.5 476.5C1396.3 474.5 1400.1 473.7 1403.9 472.5C1408.4 471.0 1410.7 468.4 1410.7 464.7C1410.7 460.1 1406.9 458.3 1403.1 457.9C1398.6 457.4 1395.6 457.4 1392.5 456.5C1389.5 455.6 1387.2 455.3 1384.2 455.3Z" transform="translate(6,53.2)" fill="none" stroke="#161616" stroke-width="1"/><path d="M1384.2 455.3C1376.6 455.3 1372.9 460.1 1372.9 466.2C1372.9 473.0 1378.2 478.6 1385.0 478.6C1388.0 478.6 1390.3 477.5 1392.5 476.5C1396.3 474.5 1400.1 473.7 1403.9 472.5C1408.4 471.0 1410.7 468.4 1410.7 464.7C1410.7 460.1 1406.9 458.3 1403.1 457.9C1398.6 457.4 1395.6 457.4 1392.5 456.5C1389.5 455.6 1387.2 455.3 1384.2 455.3Z" transform="translate(11.4,106.5)" fill="none" stroke="#161616" stroke-width="1"/><path d="M1608.200 182l11.800 12h-23.600z" fill="#a9acaf"/><path d="M1608.200 313.800l11.800-11.800h-23.600z" fill="#a9acaf"/><path d="M1542.600 247.800l11.400-11.200v22.400z" fill="#a9acaf"/><path d="M1674 247.800l-12-11.200v22.400z" fill="#a9acaf"/><path d="M1590.500 193Q1573 196.500 1565 209.500" stroke="#a9acaf" stroke-width="7.600" fill="none"/><path d="M1558.800 217.200l1.200-15 13.500 9.500z" fill="#a9acaf"/><path d="M1625.900 193Q1643.400 196.500 1651.400 209.500" stroke="#a9acaf" stroke-width="7.600" fill="none"/><path d="M1657.600 217.200l-1.200-15-13.500 9.500z" fill="#a9acaf"/><rect x="1575" y="215" width="66" height="66" rx="9" fill="#b2b5b8"/><circle cx="1580.5" cy="220.5" r="5" fill="#d2d3d4"/><circle cx="1635.5" cy="220.5" r="5" fill="#d2d3d4"/><circle cx="1580.5" cy="275.5" r="5" fill="#d2d3d4"/><circle cx="1635.5" cy="275.5" r="5" fill="#d2d3d4"/><rect x="1583" y="223" width="50" height="50" rx="2" fill="#dcddde"/><path d="M1586 230.500l4.500-4.500h35.500l4.500 4.500v35.500l-4.500 4.500h-35.500l-4.500-4.500z" fill="none" stroke="#c6c7c8" stroke-width=".8"/><path d="M1577.500 216.500l8 8M1638.500 216.500l-8 8M1577.500 279.500l8-8M1638.500 279.500l-8-8" stroke="#8a8c8e" stroke-width=".8"/><path d="M1584.300 271.600V237.200" stroke="#a8f0a8" stroke-width="1.300"/><path d="M1584.300 271.600H1618.700" stroke="#f0a8a8" stroke-width="1.300"/><path d="M1584.300 271.600L1577.500 279" stroke="#2020e0" stroke-width="1.300"/><rect x="1583.300" y="270.600" width="2" height="2" fill="#ff2020"/><path d="M1587.500 218.500l2 3 2-3M1589.500 221.500v3" stroke="#50e050" stroke-width=".9" fill="none"/><path d="M1634 265.500l5 6M1639 265.500l-5 6" stroke="#f05050" stroke-width=".9" fill="none"/><path d="M1573.500 280h4l-4 5.500h4.500" stroke="#1010ff" stroke-width="1" fill="none"/><text x="1608.200" y="251" text-anchor="middle" font-family="Liberation Sans" font-weight="bold" font-size="15.500" textLength="20.500" lengthAdjust="spacingAndGlyphs" fill="#000">TOP</text><path d="M1632 293.500l9.500-3.500 10 3v11.500l-10 4-9.500-3.500z" fill="#9b9ea1"/><path d="M1632 293.500l9.500 3 10-3.500-10-3z" fill="#a6a9ac"/><path d="M1641.500 296.500v12l10-4v-11.500z" fill="#929598"/><path d="M1654.800 295.800h12.700l-6.300 6.300z" fill="#585b5e"/><path d="M1649 784V763" stroke="#1e8a1e" stroke-width="2"/><path d="M1649 761.500l2.500 6.500h-5z" fill="#1e8a1e"/><path d="M1649 784H1670" stroke="#8c1c1c" stroke-width="2"/><path d="M1671.500 784l-6.500 2.500v-5z" fill="#8c1c1c"/><path d="M1649 780.800l3 3.200-3 3.200-3-3.200z" fill="#20208c"/><path d="M1652 755.500l2.500 3.500 2.500-3.500M1654.500 759v3.500" stroke="#000" stroke-width="1" fill="none"/><path d="M1652 777h5l-5 6.500h5.300" stroke="#000" stroke-width="1" fill="none"/><path d="M1674 777.500l5 6.500M1679 777.500l-5 6.500" stroke="#000" stroke-width="1" fill="none"/></svg>
<div style="left:537px;top:817px;width:133px;height:28px;background:linear-gradient(#dcdcdc,#e3e3e3);border:1px solid #b6b6b6;border-top:none;border-radius:0 0 3px 3px;"></div>
<div style="left:669px;top:816px;width:262px;height:31px;background:#f8f8f8;border:1px solid #b4b4b4;border-top:none;border-radius:0 0 3px 3px;"></div>
<svg style="left:549.5px;top:822.5px;" width="16" height="16" viewBox="0 0 16 16"><path d="M1 1h9v3.500h-5.500v2.500h4v3.500h-4v5.500h-3.500z" fill="#e01b24" stroke="#8a0d12" stroke-width=".6"/><g transform="translate(10.800,10.800)"><circle r="3.700" fill="#3465a4"/><rect x="-1.100" y="-5.100" width="2.200" height="2.400" fill="#3465a4" transform="rotate(0)"/><rect x="-1.100" y="-5.100" width="2.200" height="2.400" fill="#3465a4" transform="rotate(45)"/><rect x="-1.100" y="-5.100" width="2.200" height="2.400" fill="#3465a4" transform="rotate(90)"/><rect x="-1.100" y="-5.100" width="2.200" height="2.400" fill="#3465a4" transform="rotate(135)"/><rect x="-1.100" y="-5.100" width="2.200" height="2.400" fill="#3465a4" transform="rotate(180)"/><rect x="-1.100" y="-5.100" width="2.200" height="2.400" fill="#3465a4" transform="rotate(225)"/><rect x="-1.100" y="-5.100" width="2.200" height="2.400" fill="#3465a4" transform="rotate(270)"/><rect x="-1.100" y="-5.100" width="2.200" height="2.400" fill="#3465a4" transform="rotate(315)"/><circle r="1.600" fill="#eef3fa"/></g></svg>
<span class="t" id="t63" style="left:569.5px;top:824.70px;font-size:13px;line-height:13px;color:#000;letter-spacing:0.278px;">Start page</span>
<svg style="left:641px;top:826px;" width="11" height="11" viewBox="0 0 11 11"><path d="M1.500 1.500l8 8M9.500 1.500l-8 8" stroke="#8c8c8c" stroke-width="2.200"/></svg>
<svg style="left:681px;top:823.5px;" width="16" height="16" viewBox="0 0 16 16"><path d="M1 1h9v3.500h-5.500v2.500h4v3.500h-4v5.500h-3.500z" fill="#e01b24" stroke="#8a0d12" stroke-width=".6"/><g transform="translate(10.800,10.800)"><circle r="3.700" fill="#3465a4"/><rect x="-1.100" y="-5.100" width="2.200" height="2.400" fill="#3465a4" transform="rotate(0)"/><rect x="-1.100" y="-5.100" width="2.200" height="2.400" fill="#3465a4" transform="rotate(45)"/><rect x="-1.100" y="-5.100" width="2.200" height="2.400" fill="#3465a4" transform="rotate(90)"/><rect x="-1.100" y="-5.100" width="2.200" height="2.400" fill="#3465a4" transform="rotate(135)"/><rect x="-1.100" y="-5.100" width="2.200" height="2.400" fill="#3465a4" transform="rotate(180)"/><rect x="-1.100" y="-5.100" width="2.200" height="2.400" fill="#3465a4" transform="rotate(225)"/><rect x="-1.100" y="-5.100" width="2.200" height="2.400" fill="#3465a4" transform="rotate(270)"/><rect x="-1.100" y="-5.100" width="2.200" height="2.400" fill="#3465a4" transform="rotate(315)"/><circle r="1.600" fill="#eef3fa"/></g></svg>
<span class="t" id="t64" style="left:702px;top:825.70px;font-size:13px;line-height:13px;color:#000;letter-spacing:0.103px;">Test_ Link_ ArchWindow_ 04f : 1</span>
<svg style="left:903px;top:827px;" width="11" height="11" viewBox="0 0 11 11"><path d="M1.500 1.500l8 8M9.500 1.500l-8 8" stroke="#7a7a7a" stroke-width="2.200"/></svg>
<svg style="left:834px;top:850px;" width="16" height="2" viewBox="0 0 16 2"><rect x="0.0" y="0" width="1" height="1" fill="#b0b0b0"/><rect x="2.5" y="0" width="1" height="1" fill="#b0b0b0"/><rect x="5.0" y="0" width="1" height="1" fill="#b0b0b0"/><rect x="7.5" y="0" width="1" height="1" fill="#b0b0b0"/><rect x="10.0" y="0" width="1" height="1" fill="#b0b0b0"/><rect x="12.5" y="0" width="1" height="1" fill="#b0b0b0"/></svg>
<span class="t" id="t65" style="left:5.5px;top:856.80px;font-size:13px;line-height:13px;color:#000;letter-spacing:0.184px;">Selection view</span>
<svg style="left:254px;top:858px;" width="11" height="11" viewBox="0 0 11 11"><rect x=".5" y=".5" width="10" height="10" rx="2" fill="none" stroke="#6e6a66"/><rect x="4.500" y="2.500" width="4" height="4" rx=".8" fill="none" stroke="#6e6a66"/><rect x="2.500" y="4.500" width="4" height="4" rx=".8" fill="#efefef" stroke="#6e6a66"/></svg>
<svg style="left:268px;top:858px;" width="11" height="11" viewBox="0 0 11 11"><rect x=".5" y=".5" width="10" height="10" rx="2" fill="none" stroke="#6e6a66"/><path d="M3 3l5 5M8 3l-5 5" stroke="#5e5a56" stroke-width="2.200"/></svg>
<div style="left:2px;top:873px;width:249px;height:22px;background:#fff;border:1px solid #b4b4b4;border-radius:3px;"></div>
<span class="t" id="t66" style="left:5px;top:878.00px;font-size:13px;line-height:13px;color:#a4a4a4;letter-spacing:-0.241px;">Search</span>
<svg style="left:255px;top:876px;" width="16" height="15" viewBox="0 0 16 15"><path d="M.8 7.500l5-6.500h9.200v13h-9.200z" fill="#dfe9f5" stroke="#4a7ab8" stroke-width="1.300"/><path d="M7.500 4.500l5 6M12.500 4.500l-5 6" stroke="#4a7ab8" stroke-width="1.800"/></svg>
<span class="t" id="t67" style="left:273.5px;top:878.00px;font-size:13px;line-height:13px;color:#000;">1</span>
<div style="left:2px;top:896px;width:279px;height:70px;background:#fff;border:1px solid #b4b4b4;"></div>
<div style="left:3px;top:897px;width:277px;height:54px;overflow:hidden;background:#fff;"><span class="t" style="position:absolute;left:2.500px;top:0.900px;font-size:13px;line-height:13px;letter-spacing:0.100px">Test__Link__ArchWindow__04f#Link009.Edge7</span></div>
<div style="left:3px;top:951px;width:277px;height:14px;background:#e4e4e4;border-top:1px solid #c0c0c0;"></div>
<div style="left:3px;top:951px;width:13px;height:14px;background:linear-gradient(#fdfdfd,#f1f1f1);border-top:1px solid #c0c0c0;border-right:1px solid #c4c4c4;"></div>
<div style="left:267px;top:951px;width:13px;height:14px;background:linear-gradient(#fdfdfd,#f1f1f1);border-top:1px solid #c0c0c0;border-left:1px solid #c4c4c4;"></div>
<div style="left:15px;top:951px;width:182px;height:14px;background:linear-gradient(#ffffff,#f0f0f0);border-top:1px solid #c0c0c0;border-left:1px solid #c4c4c4;border-right:1px solid #c4c4c4;"></div>
<svg style="left:6.5px;top:954.5px;" width="5" height="8" viewBox="0 0 5 8"><path d="M4.500 0v8l-4.500-4z" fill="#4b4b4b"/></svg>
<svg style="left:271.5px;top:954.5px;" width="5" height="8" viewBox="0 0 5 8"><path d="M0 0l4.500 4-4.500 4z" fill="#4b4b4b"/></svg>
<svg style="left:284px;top:914px;" width="2" height="16" viewBox="0 0 2 16"><rect x="0" y="0.0" width="1" height="1" fill="#b0b0b0"/><rect x="0" y="2.5" width="1" height="1" fill="#b0b0b0"/><rect x="0" y="5.0" width="1" height="1" fill="#b0b0b0"/><rect x="0" y="7.5" width="1" height="1" fill="#b0b0b0"/><rect x="0" y="10.0" width="1" height="1" fill="#b0b0b0"/><rect x="0" y="12.5" width="1" height="1" fill="#b0b0b0"/></svg>
<div style="left:2px;top:970px;width:13px;height:13px;background:#fff;border:1px solid #b4b4b4;border-radius:2px;"></div>
<span class="t" id="t68" style="left:20.5px;top:970.00px;font-size:13px;line-height:13px;color:#000;letter-spacing:0.216px;">Picked object list</span>
<span class="t" id="t69" style="left:291px;top:856.80px;font-size:13px;line-height:13px;color:#000;letter-spacing:0.138px;">Python console</span>
<svg style="left:1031px;top:858px;" width="11" height="11" viewBox="0 0 11 11"><rect x=".5" y=".5" width="10" height="10" rx="2" fill="none" stroke="#6e6a66"/><rect x="4.500" y="2.500" width="4" height="4" rx=".8" fill="none" stroke="#6e6a66"/><rect x="2.500" y="4.500" width="4" height="4" rx=".8" fill="#efefef" stroke="#6e6a66"/></svg>
<svg style="left:1045px;top:858px;" width="11" height="11" viewBox="0 0 11 11"><rect x=".5" y=".5" width="10" height="10" rx="2" fill="none" stroke="#6e6a66"/><path d="M3 3l5 5M8 3l-5 5" stroke="#5e5a56" stroke-width="2.200"/></svg>
<div style="left:287px;top:873px;width:771px;height:114px;background:#fff;border:1px solid #b4b4b4;"></div>
<div style="left:1043px;top:874px;width:14px;height:112px;background:#e4e4e4;border-left:1px solid #c0c0c0;"></div>
<div style="left:1043px;top:874px;width:14px;height:14px;background:linear-gradient(90deg,#fdfdfd,#f1f1f1);border-left:1px solid #c0c0c0;border-bottom:1px solid #c4c4c4;"></div>
<div style="left:1043px;top:972px;width:14px;height:14px;background:linear-gradient(90deg,#fdfdfd,#f1f1f1);border-left:1px solid #c0c0c0;border-top:1px solid #c4c4c4;"></div>
<div style="left:1043px;top:945px;width:14px;height:28px;background:linear-gradient(90deg,#ffffff,#f0f0f0);border-left:1px solid #c0c0c0;border-top:1px solid #c4c4c4;border-bottom:1px solid #c4c4c4;"></div>
<svg style="left:1046.0px;top:878.0px;" width="8" height="5" viewBox="0 0 8 5"><path d="M0 4.500l4-4.500 4 4.500z" fill="#4b4b4b"/></svg>
<svg style="left:1046.0px;top:977.0px;" width="8" height="5" viewBox="0 0 8 5"><path d="M0 0h8l-4 4.500z" fill="#4b4b4b"/></svg>
<span class="t" id="t70" style="left:293px;top:876.00px;font-size:13px;line-height:13px;color:#a0a0a0;letter-spacing:3.609px;">&gt;&gt;&gt;</span>
<span class="t" id="t71" style="left:329px;top:876.00px;font-size:13px;line-height:13px;color:#000;letter-spacing:0.753px;"><span style="color:#000">Gui</span><span style="color:#a0a0a0">.</span><span style="color:#000">SendMsgToActiveView</span><span style="color:#a0a0a0">(</span><span style="color:#ff0000">&quot;Save&quot;</span><span style="color:#a0a0a0">)</span></span>
<span class="t" id="t72" style="left:293px;top:893.00px;font-size:13px;line-height:13px;color:#a0a0a0;letter-spacing:3.609px;">&gt;&gt;&gt;</span>
<span class="t" id="t73" style="left:329px;top:893.00px;font-size:13px;line-height:13px;color:#000;letter-spacing:0.685px;"><span style="color:#000">App</span><span style="color:#a0a0a0">.</span><span style="color:#000">getDocument</span><span style="color:#a0a0a0">(</span><span style="color:#ff0000">&quot;Test__Link__ArchWindow__04f&quot;</span><span style="color:#a0a0a0">)</span><span style="color:#a0a0a0">.</span><span style="color:#000">save</span><span style="color:#a0a0a0">()</span></span>
<span class="t" id="t74" style="left:293px;top:910.00px;font-size:13px;line-height:13px;color:#a0a0a0;letter-spacing:3.609px;">&gt;&gt;&gt;</span>
<span class="t" id="t75" style="left:329px;top:910.00px;font-size:13px;line-height:13px;color:#000;letter-spacing:1.082px;"><span style="color:#12a812">### End command Std_Save</span></span>
<span class="t" id="t76" style="left:293px;top:927.00px;font-size:13px;line-height:13px;color:#a0a0a0;letter-spacing:3.609px;">&gt;&gt;&gt;</span>
<span class="t" id="t77" style="left:329px;top:927.00px;font-size:13px;line-height:13px;color:#000;letter-spacing:0.803px;"><span style="color:#12a812"># Gui.Selection.clearSelection()</span></span>
<span class="t" id="t78" style="left:293px;top:944.00px;font-size:13px;line-height:13px;color:#a0a0a0;letter-spacing:3.609px;">&gt;&gt;&gt;</span>
<span class="t" id="t79" style="left:329px;top:944.00px;font-size:13px;line-height:13px;color:#000;letter-spacing:0.737px;"><span style="color:#12a812"># Gui.Selection.addSelection(&#x27;Test__Link__ArchWindow__04f&#x27;,&#x27;Link009&#x27;,&#x27;Edge7&#x27;,8225,4053.81,0)</span></span>
<span class="t" id="t80" style="left:293px;top:961.00px;font-size:13px;line-height:13px;color:#a0a0a0;letter-spacing:3.609px;">&gt;&gt;&gt;</span>
<span class="t" id="t81" style="left:1068px;top:856.80px;font-size:13px;line-height:13px;color:#000;letter-spacing:0.236px;">Report view</span>
<svg style="left:1654px;top:858px;" width="11" height="11" viewBox="0 0 11 11"><rect x=".5" y=".5" width="10" height="10" rx="2" fill="none" stroke="#6e6a66"/><rect x="4.500" y="2.500" width="4" height="4" rx=".8" fill="none" stroke="#6e6a66"/><rect x="2.500" y="4.500" width="4" height="4" rx=".8" fill="#efefef" stroke="#6e6a66"/></svg>
<svg style="left:1668px;top:858px;" width="11" height="11" viewBox="0 0 11 11"><rect x=".5" y=".5" width="10" height="10" rx="2" fill="none" stroke="#6e6a66"/><path d="M3 3l5 5M8 3l-5 5" stroke="#5e5a56" stroke-width="2.200"/></svg>
<div style="left:1064px;top:873px;width:617px;height:114px;background:#fff;border:1px solid #b4b4b4;"></div>
<div style="left:1666px;top:874px;width:14px;height:112px;background:#e4e4e4;border-left:1px solid #c0c0c0;"></div>
<div style="left:1666px;top:874px;width:14px;height:14px;background:linear-gradient(90deg,#fdfdfd,#f1f1f1);border-left:1px solid #c0c0c0;border-bottom:1px solid #c4c4c4;"></div>
<div style="left:1666px;top:972px;width:14px;height:14px;background:linear-gradient(90deg,#fdfdfd,#f1f1f1);border-left:1px solid #c0c0c0;border-top:1px solid #c4c4c4;"></div>
<div style="left:1666px;top:945px;width:14px;height:28px;background:linear-gradient(90deg,#ffffff,#f0f0f0);border-left:1px solid #c0c0c0;border-top:1px solid #c4c4c4;border-bottom:1px solid #c4c4c4;"></div>
<svg style="left:1669.0px;top:878.0px;" width="8" height="5" viewBox="0 0 8 5"><path d="M0 4.500l4-4.500 4 4.500z" fill="#4b4b4b"/></svg>
<svg style="left:1669.0px;top:977.0px;" width="8" height="5" viewBox="0 0 8 5"><path d="M0 0h8l-4 4.500z" fill="#4b4b4b"/></svg>
<span class="t" id="t82" style="left:1069.6px;top:869.00px;font-size:13px;line-height:13px;color:#000;">02:15:08  index is -  None</span>
<span class="t" id="t83" style="left:1069.6px;top:886.00px;font-size:13px;line-height:13px;color:#000;letter-spacing:0.765px;">02:15:08  linkElement is -  None</span>
<span class="t" id="t84" style="left:1069.6px;top:903.00px;font-size:13px;line-height:13px;color:#000;letter-spacing:0.830px;">02:15:08    Testing / Debugging - Done :  import ArchSketchObject</span>
<span class="t" id="t85" style="left:1069.6px;top:920.00px;font-size:13px;line-height:13px;color:#000;letter-spacing:0.791px;">02:15:08    Testing / Debugging - Done :  ArchSketchObject.setPropertiesLinkCommon(obj)</span>
<span class="t" id="t86" style="left:1069.6px;top:937.00px;font-size:13px;line-height:13px;color:#000;letter-spacing:0.760px;">02:15:08   fp is re-directed to linkFp...</span>
<span class="t" id="t87" style="left:1069.6px;top:954.00px;font-size:13px;line-height:13px;color:#0000ff;letter-spacing:0.816px;">02:15:28  Save AutoRecovery file: Needed time: 71ms</span>
<div style="left:1064px;top:857px;width:590px;height:16px;background:#efefef;"></div>
<div style="left:1064px;top:873px;width:617px;height:1px;background:#b4b4b4;"></div>
<span class="t" id="t88" style="left:1068px;top:856.80px;font-size:13px;line-height:13px;color:#000;letter-spacing:0.236px;">Report view</span>
<span class="t" id="t89" style="left:4px;top:1000.00px;font-size:13px;line-height:13px;color:#000;letter-spacing:0.271px;">Valid, Internal name: Link009</span>
<svg style="left:1314px;top:998px;" width="16" height="16" viewBox="0 0 16 16"><path d="M3.500 .5v15M8 .5v15M12.500 .5v15M.5 3.500h15M.5 8h15M.5 12.500h15" stroke="#606060" stroke-width="2.100"/><path d="M3.500 .5v15M8 .5v15M12.500 .5v15M.5 3.500h15M.5 8h15M.5 12.500h15" stroke="#fafafa" stroke-width=".9"/></svg>
<div style="left:1337px;top:994px;width:40px;height:24px;background:linear-gradient(#d8d8d8,#e0e0e0);border:1px solid #b0b0b0;border-radius:3px;"></div>
<svg style="left:1350px;top:998px;" width="14" height="16" viewBox="0 0 14 16"><path d="M4.300 7v-2.400a2.700 2.700 0 0 1 5.400 0v2.400" fill="none" stroke="#0a727a" stroke-width="2.600"/><path d="M4.300 7v-2.400a2.700 2.700 0 0 1 5.400 0v2.400" fill="none" stroke="#26cdd5" stroke-width="1.400"/><rect x="2" y="6" width="10" height="9" rx="1" fill="#26cdd5" stroke="#0a727a" stroke-width=".8"/></svg>
<svg style="left:1366.5px;top:1004.7px;" width="5" height="3" viewBox="0 0 5 3"><path d="M0 0h5l-2.500 3z" fill="#4b4b4b"/></svg>
<svg style="left:1384px;top:998px;" width="16" height="16" viewBox="0 0 16 16"><path d="M5 6.500h9.500M5.500 6v9" stroke="#0a727a" stroke-width="1.400"/><text x="5.500" y="5" font-family="Liberation Sans" font-weight="bold" font-size="6.500" fill="#0a727a" stroke="#0a727a" stroke-width=".3">1.00</text><text transform="translate(4.200,15.500) rotate(-90)" font-family="Liberation Sans" font-weight="bold" font-size="6.500" fill="#0a727a" stroke="#0a727a" stroke-width=".3">1.00</text><path d="M13 5l1.700 1.500-1.700 1.500M4 13.500l1.500 1.700 1.500-1.700" stroke="#0a727a" stroke-width="1" fill="none"/></svg>
<svg style="left:1414.5px;top:999.5px;" width="13" height="13" viewBox="0 0 13 13"><path d="M5 .5h3v4.500h4.500v3h-4.500v4.500h-3v-4.500h-4.500v-3h4.500z" fill="#26cdd5" stroke="#0a727a" stroke-width=".8"/></svg>
<svg style="left:1442px;top:998px;" width="16" height="16" viewBox="0 0 16 16"><rect x=".5" y=".5" width="15" height="15" rx="1.500" fill="#26cdd5" stroke="#0a727a" stroke-width=".8"/><circle cx="5.500" cy="10" r="2" fill="none" stroke="#0a727a" stroke-width=".8"/></svg>
<svg style="left:1495px;top:1000px;" width="10" height="13" viewBox="0 0 10 13"><rect x=".8" y=".8" width="8.400" height="11.400" rx="3.500" fill="#fff" stroke="#222" stroke-width="1.300"/><path d="M5 2.500v3" stroke="#222" stroke-width="1.300"/></svg>
<span class="t" id="t90" style="left:1509.5px;top:1000.00px;font-size:13px;line-height:13px;color:#000;letter-spacing:-1.477px;">CAD</span>
<svg style="left:1542.5px;top:1004px;" width="7" height="4" viewBox="0 0 7 4"><path d="M0 0h7l-3.500 4z" fill="#6a6a6a"/></svg>
<span class="t" id="t91" style="left:1560.3px;top:1000.00px;font-size:13px;line-height:13px;color:#000;letter-spacing:0.411px;">21.39 m x 11.98 m</span>
<div style="left:0px;top:0px;width:1px;height:1025px;background:#bdbdbd;"></div>
<div style="left:1681px;top:37px;width:1px;height:988px;background:#c2c2c2;"></div>
<div style="left:1681px;top:0px;width:1px;height:37px;background:#bdbab7;"></div>
<div style="left:0px;top:1024px;width:1682px;height:1px;background:#bdbdbd;"></div></div></body></html>
